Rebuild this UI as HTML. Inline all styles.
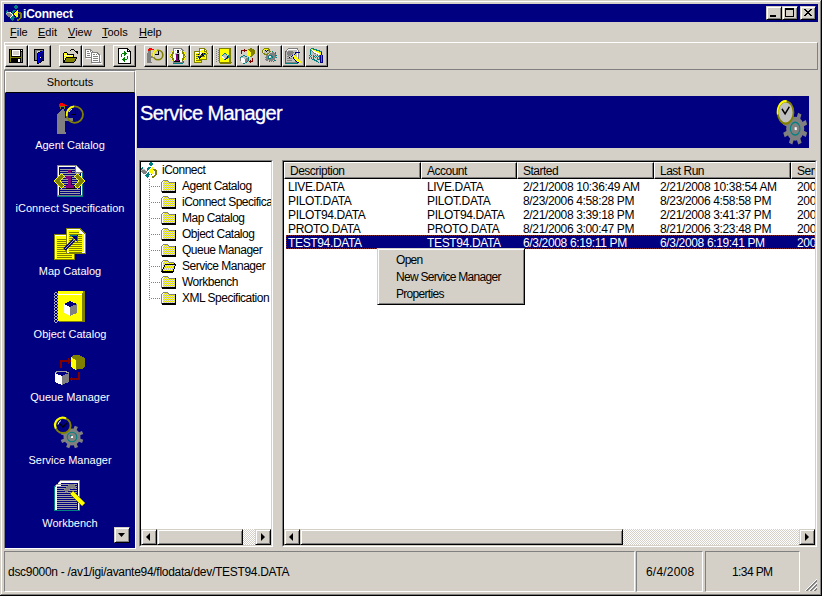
<!DOCTYPE html>
<html><head><meta charset="utf-8">
<style>
*{margin:0;padding:0;box-sizing:border-box}
html,body{width:822px;height:596px;overflow:hidden;background:#d4d0c8;font:11px "Liberation Sans",sans-serif;color:#000}
.a{position:absolute}
.t{position:absolute;white-space:pre;line-height:13px;font-size:11px}
.w{color:#fff}
.navy{background:#000080}
.track{position:absolute;background-color:#fff;background-image:linear-gradient(45deg,#d4d0c8 25%,transparent 25%,transparent 75%,#d4d0c8 75%),linear-gradient(45deg,#d4d0c8 25%,transparent 25%,transparent 75%,#d4d0c8 75%);background-size:2px 2px;background-position:0 0,1px 1px}
.u{text-decoration:underline;text-underline-offset:1px}
svg{overflow:visible}
</style></head><body>
<div class="a" style="left:1px;top:1px;width:820px;height:1px;background:#fff"></div>
<div class="a" style="left:1px;top:1px;width:1px;height:594px;background:#fff"></div>
<div class="a" style="left:820px;top:1px;width:1px;height:594px;background:#808080"></div>
<div class="a" style="left:1px;top:594px;width:820px;height:1px;background:#808080"></div>
<div class="a" style="left:821px;top:0;width:1px;height:596px;background:#000"></div>
<div class="a" style="left:0;top:595px;width:822px;height:1px;background:#000"></div>
<div class="a navy" style="left:4px;top:4px;width:814px;height:18px"></div>
<svg class="a" style="left:6px;top:5px" width="16" height="16" viewBox="0 0 16 16" shape-rendering="crispEdges"><rect x="9" y="0" width="2" height="1" fill="#008080"/><rect x="8" y="1" width="4" height="1" fill="#008080"/><rect x="8" y="2" width="4" height="1" fill="#008080"/><rect x="9" y="3" width="2" height="1" fill="#008080"/><rect x="1" y="5" width="1" height="1" fill="#008080"/><rect x="7" y="5" width="3" height="1" fill="#008080"/><rect x="11" y="5" width="1" height="1" fill="#ffff00"/><rect x="0" y="6" width="2" height="1" fill="#008080"/><rect x="6" y="6" width="3" height="1" fill="#008080"/><rect x="10" y="6" width="2" height="1" fill="#ffff00"/><rect x="0" y="7" width="1" height="1" fill="#008080"/><rect x="1" y="7" width="3" height="1" fill="#c0c0c0"/><rect x="4" y="7" width="1" height="1" fill="#ffffff"/><rect x="6" y="7" width="2" height="1" fill="#008080"/><rect x="9" y="7" width="3" height="1" fill="#ffff00"/><rect x="12" y="7" width="3" height="1" fill="#808000"/><rect x="0" y="8" width="1" height="1" fill="#c0c0c0"/><rect x="1" y="8" width="3" height="1" fill="#808080"/><rect x="4" y="8" width="1" height="1" fill="#c0c0c0"/><rect x="5" y="8" width="1" height="1" fill="#ffffff"/><rect x="6" y="8" width="1" height="1" fill="#008080"/><rect x="8" y="8" width="4" height="1" fill="#ffff00"/><rect x="13" y="8" width="3" height="1" fill="#808000"/><rect x="0" y="9" width="6" height="1" fill="#808080"/><rect x="6" y="9" width="1" height="1" fill="#ffffff"/><rect x="8" y="9" width="4" height="1" fill="#ffff00"/><rect x="14" y="9" width="2" height="1" fill="#808000"/><rect x="1" y="10" width="5" height="1" fill="#808080"/><rect x="6" y="10" width="1" height="1" fill="#ffffff"/><rect x="7" y="10" width="1" height="1" fill="#008080"/><rect x="9" y="10" width="3" height="1" fill="#ffff00"/><rect x="14" y="10" width="2" height="1" fill="#808000"/><rect x="2" y="11" width="3" height="1" fill="#808080"/><rect x="5" y="11" width="1" height="1" fill="#ffffff"/><rect x="6" y="11" width="2" height="1" fill="#008080"/><rect x="10" y="11" width="2" height="1" fill="#ffff00"/><rect x="14" y="11" width="2" height="1" fill="#808000"/><rect x="4" y="12" width="1" height="1" fill="#ffffff"/><rect x="5" y="12" width="4" height="1" fill="#008080"/><rect x="10" y="12" width="1" height="1" fill="#008080"/><rect x="14" y="12" width="2" height="1" fill="#808000"/><rect x="4" y="13" width="4" height="1" fill="#008080"/><rect x="13" y="13" width="2" height="1" fill="#808000"/><rect x="5" y="14" width="3" height="1" fill="#008080"/><rect x="11" y="14" width="3" height="1" fill="#808000"/><rect x="6" y="15" width="1" height="1" fill="#008080"/><rect x="11" y="15" width="2" height="1" fill="#808000"/></svg>
<div class="t w" style="left:23px;top:8px;font-weight:bold;font-size:12px;letter-spacing:-0.2px">iConnect</div>
<div class="a" style="left:766px;top:6px;width:16px;height:14px;background:#d4d0c8;border-top:1px solid #d4d0c8;border-left:1px solid #d4d0c8;border-right:1px solid #000;border-bottom:1px solid #000;box-shadow:inset 1px 1px 0 #fff,inset -1px -1px 0 #808080"><svg class="a" style="left:3px;top:8px" width="6" height="2"><rect width="6" height="2" fill="#000"/></svg></div>
<div class="a" style="left:782px;top:6px;width:16px;height:14px;background:#d4d0c8;border-top:1px solid #d4d0c8;border-left:1px solid #d4d0c8;border-right:1px solid #000;border-bottom:1px solid #000;box-shadow:inset 1px 1px 0 #fff,inset -1px -1px 0 #808080"><svg class="a" style="left:2px;top:1px" width="9" height="9" shape-rendering="crispEdges"><rect width="9" height="2" fill="#000"/><rect y="2" width="1" height="7" fill="#000"/><rect x="8" y="2" width="1" height="7" fill="#000"/><rect y="8" width="9" height="1" fill="#000"/></svg></div>
<div class="a" style="left:800px;top:6px;width:16px;height:14px;background:#d4d0c8;border-top:1px solid #d4d0c8;border-left:1px solid #d4d0c8;border-right:1px solid #000;border-bottom:1px solid #000;box-shadow:inset 1px 1px 0 #fff,inset -1px -1px 0 #808080"><svg class="a" style="left:3px;top:2px" width="8" height="7" shape-rendering="crispEdges"><rect x="0" y="0" width="2" height="1" fill="#000000"/><rect x="6" y="0" width="2" height="1" fill="#000000"/><rect x="1" y="1" width="2" height="1" fill="#000000"/><rect x="5" y="1" width="2" height="1" fill="#000000"/><rect x="2" y="2" width="4" height="1" fill="#000000"/><rect x="3" y="3" width="2" height="1" fill="#000000"/><rect x="2" y="4" width="4" height="1" fill="#000000"/><rect x="1" y="5" width="2" height="1" fill="#000000"/><rect x="5" y="5" width="2" height="1" fill="#000000"/><rect x="0" y="6" width="2" height="1" fill="#000000"/><rect x="6" y="6" width="2" height="1" fill="#000000"/></svg></div>
<div class="t" style="left:10px;top:26px;"><span class="u">F</span>ile</div>
<div class="t" style="left:38px;top:26px;"><span class="u">E</span>dit</div>
<div class="t" style="left:68px;top:26px;"><span class="u">V</span>iew</div>
<div class="t" style="left:102px;top:26px;"><span class="u">T</span>ools</div>
<div class="t" style="left:139px;top:26px;"><span class="u">H</span>elp</div>
<div class="a" style="left:4px;top:42px;width:814px;height:28px;border-top:1px solid #fff;border-left:1px solid #fff;border-right:1px solid #808080;border-bottom:1px solid #808080;"></div>
<div class="a" style="left:5px;top:45px;width:23px;height:22px;background:#d4d0c8;border-top:1px solid #fff;border-left:1px solid #fff;border-right:1px solid #000;border-bottom:1px solid #000;box-shadow:inset -1px -1px 0 #808080"></div>
<svg class="a" style="left:8px;top:48px" width="16" height="16" viewBox="0 0 16 16" shape-rendering="crispEdges"><rect x="1" y="1" width="14" height="1" fill="#000000"/><rect x="1" y="2" width="1" height="1" fill="#000000"/><rect x="2" y="2" width="1" height="1" fill="#808000"/><rect x="3" y="2" width="1" height="1" fill="#000000"/><rect x="4" y="2" width="8" height="1" fill="#ffffff"/><rect x="12" y="2" width="1" height="1" fill="#000000"/><rect x="13" y="2" width="1" height="1" fill="#ffffff"/><rect x="14" y="2" width="1" height="1" fill="#000000"/><rect x="1" y="3" width="1" height="1" fill="#000000"/><rect x="2" y="3" width="1" height="1" fill="#808000"/><rect x="3" y="3" width="1" height="1" fill="#000000"/><rect x="4" y="3" width="1" height="1" fill="#ffffff"/><rect x="5" y="3" width="6" height="1" fill="#d4d0c8"/><rect x="11" y="3" width="1" height="1" fill="#ffffff"/><rect x="12" y="3" width="3" height="1" fill="#000000"/><rect x="1" y="4" width="1" height="1" fill="#000000"/><rect x="2" y="4" width="1" height="1" fill="#808000"/><rect x="3" y="4" width="1" height="1" fill="#000000"/><rect x="4" y="4" width="1" height="1" fill="#ffffff"/><rect x="5" y="4" width="6" height="1" fill="#d4d0c8"/><rect x="11" y="4" width="1" height="1" fill="#ffffff"/><rect x="12" y="4" width="1" height="1" fill="#000000"/><rect x="13" y="4" width="1" height="1" fill="#808000"/><rect x="14" y="4" width="1" height="1" fill="#000000"/><rect x="1" y="5" width="1" height="1" fill="#000000"/><rect x="2" y="5" width="1" height="1" fill="#808000"/><rect x="3" y="5" width="1" height="1" fill="#000000"/><rect x="4" y="5" width="1" height="1" fill="#ffffff"/><rect x="5" y="5" width="6" height="1" fill="#d4d0c8"/><rect x="11" y="5" width="1" height="1" fill="#ffffff"/><rect x="12" y="5" width="1" height="1" fill="#000000"/><rect x="13" y="5" width="1" height="1" fill="#808000"/><rect x="14" y="5" width="1" height="1" fill="#000000"/><rect x="1" y="6" width="1" height="1" fill="#000000"/><rect x="2" y="6" width="1" height="1" fill="#808000"/><rect x="3" y="6" width="1" height="1" fill="#000000"/><rect x="4" y="6" width="1" height="1" fill="#ffffff"/><rect x="5" y="6" width="6" height="1" fill="#d4d0c8"/><rect x="11" y="6" width="1" height="1" fill="#ffffff"/><rect x="12" y="6" width="1" height="1" fill="#000000"/><rect x="13" y="6" width="1" height="1" fill="#808000"/><rect x="14" y="6" width="1" height="1" fill="#000000"/><rect x="1" y="7" width="1" height="1" fill="#000000"/><rect x="2" y="7" width="1" height="1" fill="#808000"/><rect x="3" y="7" width="1" height="1" fill="#000000"/><rect x="4" y="7" width="8" height="1" fill="#ffffff"/><rect x="12" y="7" width="1" height="1" fill="#000000"/><rect x="13" y="7" width="1" height="1" fill="#808000"/><rect x="14" y="7" width="1" height="1" fill="#000000"/><rect x="1" y="8" width="1" height="1" fill="#000000"/><rect x="2" y="8" width="1" height="1" fill="#808000"/><rect x="3" y="8" width="10" height="1" fill="#000000"/><rect x="13" y="8" width="1" height="1" fill="#808000"/><rect x="14" y="8" width="1" height="1" fill="#000000"/><rect x="1" y="9" width="1" height="1" fill="#000000"/><rect x="2" y="9" width="12" height="1" fill="#808000"/><rect x="14" y="9" width="1" height="1" fill="#000000"/><rect x="1" y="10" width="1" height="1" fill="#000000"/><rect x="2" y="10" width="1" height="1" fill="#808000"/><rect x="3" y="10" width="10" height="1" fill="#000000"/><rect x="13" y="10" width="1" height="1" fill="#808000"/><rect x="14" y="10" width="1" height="1" fill="#000000"/><rect x="1" y="11" width="1" height="1" fill="#000000"/><rect x="2" y="11" width="1" height="1" fill="#808000"/><rect x="3" y="11" width="7" height="1" fill="#000000"/><rect x="10" y="11" width="2" height="1" fill="#ffffff"/><rect x="12" y="11" width="1" height="1" fill="#000000"/><rect x="13" y="11" width="1" height="1" fill="#808000"/><rect x="14" y="11" width="1" height="1" fill="#000000"/><rect x="1" y="12" width="1" height="1" fill="#000000"/><rect x="2" y="12" width="1" height="1" fill="#808000"/><rect x="3" y="12" width="7" height="1" fill="#000000"/><rect x="10" y="12" width="2" height="1" fill="#ffffff"/><rect x="12" y="12" width="1" height="1" fill="#000000"/><rect x="13" y="12" width="1" height="1" fill="#808000"/><rect x="14" y="12" width="1" height="1" fill="#000000"/><rect x="1" y="13" width="1" height="1" fill="#000000"/><rect x="2" y="13" width="1" height="1" fill="#808000"/><rect x="3" y="13" width="7" height="1" fill="#000000"/><rect x="10" y="13" width="2" height="1" fill="#ffffff"/><rect x="12" y="13" width="1" height="1" fill="#000000"/><rect x="13" y="13" width="1" height="1" fill="#808000"/><rect x="14" y="13" width="1" height="1" fill="#000000"/><rect x="1" y="14" width="14" height="1" fill="#000000"/></svg>
<div class="a" style="left:28px;top:45px;width:23px;height:22px;background:#d4d0c8;border-top:1px solid #fff;border-left:1px solid #fff;border-right:1px solid #000;border-bottom:1px solid #000;box-shadow:inset -1px -1px 0 #808080"></div>
<svg class="a" style="left:31px;top:48px" width="16" height="16" viewBox="0 0 16 16" shape-rendering="crispEdges"><rect x="3" y="1" width="10" height="1" fill="#000000"/><rect x="3" y="2" width="1" height="1" fill="#000000"/><rect x="4" y="2" width="8" height="1" fill="#808080"/><rect x="12" y="2" width="1" height="1" fill="#000000"/><rect x="3" y="3" width="1" height="1" fill="#000000"/><rect x="4" y="3" width="2" height="1" fill="#808080"/><rect x="9" y="3" width="2" height="1" fill="#000000"/><rect x="11" y="3" width="1" height="1" fill="#0000ff"/><rect x="12" y="3" width="1" height="1" fill="#000000"/><rect x="3" y="4" width="1" height="1" fill="#000000"/><rect x="4" y="4" width="2" height="1" fill="#808080"/><rect x="7" y="4" width="2" height="1" fill="#000000"/><rect x="9" y="4" width="1" height="1" fill="#0000ff"/><rect x="10" y="4" width="2" height="1" fill="#000080"/><rect x="12" y="4" width="1" height="1" fill="#000000"/><rect x="3" y="5" width="1" height="1" fill="#000000"/><rect x="4" y="5" width="2" height="1" fill="#808080"/><rect x="6" y="5" width="1" height="1" fill="#000000"/><rect x="7" y="5" width="1" height="1" fill="#0000ff"/><rect x="8" y="5" width="4" height="1" fill="#000080"/><rect x="12" y="5" width="1" height="1" fill="#000000"/><rect x="3" y="6" width="1" height="1" fill="#000000"/><rect x="4" y="6" width="2" height="1" fill="#808080"/><rect x="6" y="6" width="1" height="1" fill="#000000"/><rect x="7" y="6" width="1" height="1" fill="#0000ff"/><rect x="8" y="6" width="4" height="1" fill="#000080"/><rect x="12" y="6" width="1" height="1" fill="#000000"/><rect x="3" y="7" width="1" height="1" fill="#000000"/><rect x="4" y="7" width="2" height="1" fill="#808080"/><rect x="6" y="7" width="1" height="1" fill="#000000"/><rect x="7" y="7" width="1" height="1" fill="#0000ff"/><rect x="8" y="7" width="4" height="1" fill="#000080"/><rect x="12" y="7" width="1" height="1" fill="#000000"/><rect x="3" y="8" width="1" height="1" fill="#000000"/><rect x="4" y="8" width="2" height="1" fill="#808080"/><rect x="6" y="8" width="1" height="1" fill="#000000"/><rect x="7" y="8" width="1" height="1" fill="#0000ff"/><rect x="8" y="8" width="4" height="1" fill="#000080"/><rect x="12" y="8" width="1" height="1" fill="#000000"/><rect x="3" y="9" width="1" height="1" fill="#000000"/><rect x="4" y="9" width="2" height="1" fill="#808080"/><rect x="6" y="9" width="1" height="1" fill="#000000"/><rect x="7" y="9" width="1" height="1" fill="#0000ff"/><rect x="8" y="9" width="1" height="1" fill="#000080"/><rect x="9" y="9" width="1" height="1" fill="#ffffc0"/><rect x="10" y="9" width="2" height="1" fill="#000080"/><rect x="12" y="9" width="1" height="1" fill="#000000"/><rect x="3" y="10" width="1" height="1" fill="#000000"/><rect x="4" y="10" width="2" height="1" fill="#808080"/><rect x="6" y="10" width="1" height="1" fill="#000000"/><rect x="7" y="10" width="1" height="1" fill="#0000ff"/><rect x="8" y="10" width="4" height="1" fill="#000080"/><rect x="12" y="10" width="1" height="1" fill="#000000"/><rect x="3" y="11" width="1" height="1" fill="#000000"/><rect x="4" y="11" width="2" height="1" fill="#808080"/><rect x="6" y="11" width="1" height="1" fill="#000000"/><rect x="7" y="11" width="1" height="1" fill="#0000ff"/><rect x="8" y="11" width="4" height="1" fill="#000080"/><rect x="12" y="11" width="1" height="1" fill="#000000"/><rect x="3" y="12" width="4" height="1" fill="#000000"/><rect x="7" y="12" width="1" height="1" fill="#0000ff"/><rect x="8" y="12" width="3" height="1" fill="#000080"/><rect x="11" y="12" width="2" height="1" fill="#000000"/><rect x="6" y="13" width="1" height="1" fill="#000000"/><rect x="7" y="13" width="1" height="1" fill="#0000ff"/><rect x="8" y="13" width="2" height="1" fill="#000080"/><rect x="10" y="13" width="1" height="1" fill="#000000"/><rect x="6" y="14" width="1" height="1" fill="#000000"/><rect x="7" y="14" width="1" height="1" fill="#0000ff"/><rect x="8" y="14" width="2" height="1" fill="#000000"/><rect x="6" y="15" width="2" height="1" fill="#000000"/></svg>
<div class="a" style="left:59px;top:45px;width:23px;height:22px;background:#d4d0c8;border-top:1px solid #fff;border-left:1px solid #fff;border-right:1px solid #000;border-bottom:1px solid #000;box-shadow:inset -1px -1px 0 #808080"></div>
<svg class="a" style="left:62px;top:48px" width="16" height="16" viewBox="0 0 16 16" shape-rendering="crispEdges"><rect x="9" y="1" width="3" height="1" fill="#000000"/><rect x="8" y="2" width="1" height="1" fill="#000000"/><rect x="12" y="2" width="1" height="1" fill="#000000"/><rect x="13" y="3" width="3" height="1" fill="#000000"/><rect x="2" y="4" width="3" height="1" fill="#000000"/><rect x="14" y="4" width="2" height="1" fill="#000000"/><rect x="1" y="5" width="1" height="1" fill="#000000"/><rect x="2" y="5" width="1" height="1" fill="#ffff00"/><rect x="3" y="5" width="1" height="1" fill="#ffffc0"/><rect x="4" y="5" width="1" height="1" fill="#ffff00"/><rect x="5" y="5" width="1" height="1" fill="#000000"/><rect x="15" y="5" width="1" height="1" fill="#000000"/><rect x="1" y="6" width="1" height="1" fill="#000000"/><rect x="2" y="6" width="1" height="1" fill="#ffff00"/><rect x="3" y="6" width="1" height="1" fill="#ffffc0"/><rect x="4" y="6" width="1" height="1" fill="#ffff00"/><rect x="5" y="6" width="7" height="1" fill="#000000"/><rect x="1" y="7" width="1" height="1" fill="#000000"/><rect x="2" y="7" width="1" height="1" fill="#ffffc0"/><rect x="3" y="7" width="1" height="1" fill="#ffff00"/><rect x="4" y="7" width="1" height="1" fill="#ffffc0"/><rect x="5" y="7" width="1" height="1" fill="#ffff00"/><rect x="6" y="7" width="1" height="1" fill="#ffffc0"/><rect x="7" y="7" width="1" height="1" fill="#ffff00"/><rect x="8" y="7" width="1" height="1" fill="#ffffc0"/><rect x="9" y="7" width="1" height="1" fill="#ffff00"/><rect x="10" y="7" width="1" height="1" fill="#ffffc0"/><rect x="11" y="7" width="1" height="1" fill="#000000"/><rect x="1" y="8" width="1" height="1" fill="#000000"/><rect x="2" y="8" width="1" height="1" fill="#ffff00"/><rect x="3" y="8" width="1" height="1" fill="#ffffc0"/><rect x="4" y="8" width="1" height="1" fill="#ffff00"/><rect x="5" y="8" width="1" height="1" fill="#ffffc0"/><rect x="6" y="8" width="1" height="1" fill="#ffff00"/><rect x="7" y="8" width="1" height="1" fill="#ffffc0"/><rect x="8" y="8" width="1" height="1" fill="#ffff00"/><rect x="9" y="8" width="1" height="1" fill="#ffffc0"/><rect x="10" y="8" width="1" height="1" fill="#ffff00"/><rect x="11" y="8" width="1" height="1" fill="#000000"/><rect x="1" y="9" width="1" height="1" fill="#000000"/><rect x="2" y="9" width="1" height="1" fill="#ffffc0"/><rect x="3" y="9" width="1" height="1" fill="#ffff00"/><rect x="4" y="9" width="11" height="1" fill="#000000"/><rect x="1" y="10" width="1" height="1" fill="#000000"/><rect x="2" y="10" width="1" height="1" fill="#ffff00"/><rect x="3" y="10" width="1" height="1" fill="#000000"/><rect x="4" y="10" width="10" height="1" fill="#808000"/><rect x="14" y="10" width="1" height="1" fill="#000000"/><rect x="1" y="11" width="1" height="1" fill="#000000"/><rect x="2" y="11" width="1" height="1" fill="#ffffc0"/><rect x="3" y="11" width="1" height="1" fill="#000000"/><rect x="4" y="11" width="9" height="1" fill="#808000"/><rect x="13" y="11" width="1" height="1" fill="#000000"/><rect x="1" y="12" width="2" height="1" fill="#000000"/><rect x="3" y="12" width="10" height="1" fill="#808000"/><rect x="13" y="12" width="1" height="1" fill="#000000"/><rect x="1" y="13" width="2" height="1" fill="#000000"/><rect x="3" y="13" width="9" height="1" fill="#808000"/><rect x="12" y="13" width="1" height="1" fill="#000000"/><rect x="1" y="14" width="11" height="1" fill="#000000"/></svg>
<div class="a" style="left:82px;top:45px;width:23px;height:22px;background:#d4d0c8;border-top:1px solid #fff;border-left:1px solid #fff;border-right:1px solid #000;border-bottom:1px solid #000;box-shadow:inset -1px -1px 0 #808080"></div>
<svg class="a" style="left:85px;top:48px" width="16" height="16" viewBox="0 0 16 16" shape-rendering="crispEdges"><rect x="0" y="1" width="6" height="1" fill="#808080"/><rect x="0" y="2" width="1" height="1" fill="#808080"/><rect x="1" y="2" width="4" height="1" fill="#ffffff"/><rect x="5" y="2" width="2" height="1" fill="#808080"/><rect x="0" y="3" width="1" height="1" fill="#808080"/><rect x="1" y="3" width="1" height="1" fill="#ffffff"/><rect x="2" y="3" width="2" height="1" fill="#808080"/><rect x="4" y="3" width="1" height="1" fill="#ffffff"/><rect x="5" y="3" width="1" height="1" fill="#808080"/><rect x="6" y="3" width="1" height="1" fill="#ffffff"/><rect x="7" y="3" width="1" height="1" fill="#808080"/><rect x="0" y="4" width="1" height="1" fill="#808080"/><rect x="1" y="4" width="5" height="1" fill="#ffffff"/><rect x="6" y="4" width="7" height="1" fill="#808080"/><rect x="0" y="5" width="1" height="1" fill="#808080"/><rect x="1" y="5" width="1" height="1" fill="#ffffff"/><rect x="2" y="5" width="3" height="1" fill="#808080"/><rect x="5" y="5" width="1" height="1" fill="#ffffff"/><rect x="6" y="5" width="1" height="1" fill="#808080"/><rect x="7" y="5" width="5" height="1" fill="#ffffff"/><rect x="12" y="5" width="2" height="1" fill="#808080"/><rect x="0" y="6" width="1" height="1" fill="#808080"/><rect x="1" y="6" width="5" height="1" fill="#ffffff"/><rect x="6" y="6" width="1" height="1" fill="#808080"/><rect x="7" y="6" width="1" height="1" fill="#ffffff"/><rect x="8" y="6" width="2" height="1" fill="#808080"/><rect x="10" y="6" width="1" height="1" fill="#ffffff"/><rect x="11" y="6" width="1" height="1" fill="#808080"/><rect x="12" y="6" width="1" height="1" fill="#ffffff"/><rect x="13" y="6" width="2" height="1" fill="#808080"/><rect x="0" y="7" width="1" height="1" fill="#808080"/><rect x="1" y="7" width="1" height="1" fill="#ffffff"/><rect x="2" y="7" width="3" height="1" fill="#808080"/><rect x="5" y="7" width="1" height="1" fill="#ffffff"/><rect x="6" y="7" width="1" height="1" fill="#808080"/><rect x="7" y="7" width="7" height="1" fill="#ffffff"/><rect x="14" y="7" width="1" height="1" fill="#808080"/><rect x="15" y="7" width="1" height="1" fill="#ffffff"/><rect x="0" y="8" width="1" height="1" fill="#808080"/><rect x="1" y="8" width="5" height="1" fill="#ffffff"/><rect x="6" y="8" width="1" height="1" fill="#808080"/><rect x="7" y="8" width="1" height="1" fill="#ffffff"/><rect x="8" y="8" width="5" height="1" fill="#808080"/><rect x="13" y="8" width="1" height="1" fill="#ffffff"/><rect x="14" y="8" width="1" height="1" fill="#808080"/><rect x="15" y="8" width="1" height="1" fill="#ffffff"/><rect x="0" y="9" width="7" height="1" fill="#808080"/><rect x="7" y="9" width="7" height="1" fill="#ffffff"/><rect x="14" y="9" width="1" height="1" fill="#808080"/><rect x="15" y="9" width="1" height="1" fill="#ffffff"/><rect x="1" y="10" width="5" height="1" fill="#ffffff"/><rect x="6" y="10" width="1" height="1" fill="#808080"/><rect x="7" y="10" width="1" height="1" fill="#ffffff"/><rect x="8" y="10" width="5" height="1" fill="#808080"/><rect x="13" y="10" width="1" height="1" fill="#ffffff"/><rect x="14" y="10" width="1" height="1" fill="#808080"/><rect x="15" y="10" width="1" height="1" fill="#ffffff"/><rect x="6" y="11" width="1" height="1" fill="#808080"/><rect x="7" y="11" width="7" height="1" fill="#ffffff"/><rect x="14" y="11" width="1" height="1" fill="#808080"/><rect x="15" y="11" width="1" height="1" fill="#ffffff"/><rect x="6" y="12" width="1" height="1" fill="#808080"/><rect x="7" y="12" width="1" height="1" fill="#ffffff"/><rect x="8" y="12" width="5" height="1" fill="#808080"/><rect x="13" y="12" width="1" height="1" fill="#ffffff"/><rect x="14" y="12" width="1" height="1" fill="#808080"/><rect x="15" y="12" width="1" height="1" fill="#ffffff"/><rect x="6" y="13" width="1" height="1" fill="#808080"/><rect x="7" y="13" width="7" height="1" fill="#ffffff"/><rect x="14" y="13" width="1" height="1" fill="#808080"/><rect x="15" y="13" width="1" height="1" fill="#ffffff"/><rect x="6" y="14" width="10" height="1" fill="#808080"/><rect x="7" y="15" width="10" height="1" fill="#ffffff"/></svg>
<div class="a" style="left:113px;top:45px;width:23px;height:22px;background:#d4d0c8;border-top:1px solid #fff;border-left:1px solid #fff;border-right:1px solid #000;border-bottom:1px solid #000;box-shadow:inset -1px -1px 0 #808080"></div>
<svg class="a" style="left:116px;top:48px" width="16" height="16" viewBox="0 0 16 16" shape-rendering="crispEdges"><rect x="2" y="0" width="10" height="1" fill="#000000"/><rect x="2" y="1" width="1" height="1" fill="#000000"/><rect x="3" y="1" width="8" height="1" fill="#ffffff"/><rect x="11" y="1" width="2" height="1" fill="#000000"/><rect x="2" y="2" width="1" height="1" fill="#000000"/><rect x="3" y="2" width="8" height="1" fill="#ffffff"/><rect x="11" y="2" width="1" height="1" fill="#000000"/><rect x="12" y="2" width="1" height="1" fill="#ffffff"/><rect x="13" y="2" width="1" height="1" fill="#000000"/><rect x="2" y="3" width="1" height="1" fill="#000000"/><rect x="3" y="3" width="5" height="1" fill="#ffffff"/><rect x="8" y="3" width="1" height="1" fill="#008000"/><rect x="9" y="3" width="2" height="1" fill="#ffffff"/><rect x="11" y="3" width="4" height="1" fill="#000000"/><rect x="2" y="4" width="1" height="1" fill="#000000"/><rect x="3" y="4" width="5" height="1" fill="#ffffff"/><rect x="8" y="4" width="2" height="1" fill="#008000"/><rect x="10" y="4" width="4" height="1" fill="#ffffff"/><rect x="14" y="4" width="1" height="1" fill="#000000"/><rect x="2" y="5" width="1" height="1" fill="#000000"/><rect x="3" y="5" width="3" height="1" fill="#ffffff"/><rect x="6" y="5" width="5" height="1" fill="#008000"/><rect x="11" y="5" width="3" height="1" fill="#ffffff"/><rect x="14" y="5" width="1" height="1" fill="#000000"/><rect x="2" y="6" width="1" height="1" fill="#000000"/><rect x="3" y="6" width="2" height="1" fill="#ffffff"/><rect x="5" y="6" width="1" height="1" fill="#008000"/><rect x="6" y="6" width="2" height="1" fill="#ffffff"/><rect x="8" y="6" width="2" height="1" fill="#008000"/><rect x="10" y="6" width="4" height="1" fill="#ffffff"/><rect x="14" y="6" width="1" height="1" fill="#000000"/><rect x="2" y="7" width="1" height="1" fill="#000000"/><rect x="3" y="7" width="2" height="1" fill="#ffffff"/><rect x="5" y="7" width="1" height="1" fill="#008000"/><rect x="6" y="7" width="2" height="1" fill="#ffffff"/><rect x="8" y="7" width="1" height="1" fill="#008000"/><rect x="9" y="7" width="5" height="1" fill="#ffffff"/><rect x="14" y="7" width="1" height="1" fill="#000000"/><rect x="2" y="8" width="1" height="1" fill="#000000"/><rect x="3" y="8" width="2" height="1" fill="#ffffff"/><rect x="5" y="8" width="1" height="1" fill="#008000"/><rect x="6" y="8" width="5" height="1" fill="#ffffff"/><rect x="11" y="8" width="1" height="1" fill="#008000"/><rect x="12" y="8" width="2" height="1" fill="#ffffff"/><rect x="14" y="8" width="1" height="1" fill="#000000"/><rect x="2" y="9" width="1" height="1" fill="#000000"/><rect x="3" y="9" width="5" height="1" fill="#ffffff"/><rect x="8" y="9" width="1" height="1" fill="#008000"/><rect x="9" y="9" width="2" height="1" fill="#ffffff"/><rect x="11" y="9" width="1" height="1" fill="#008000"/><rect x="12" y="9" width="2" height="1" fill="#ffffff"/><rect x="14" y="9" width="1" height="1" fill="#000000"/><rect x="2" y="10" width="1" height="1" fill="#000000"/><rect x="3" y="10" width="4" height="1" fill="#ffffff"/><rect x="7" y="10" width="2" height="1" fill="#008000"/><rect x="9" y="10" width="2" height="1" fill="#ffffff"/><rect x="11" y="10" width="1" height="1" fill="#008000"/><rect x="12" y="10" width="2" height="1" fill="#ffffff"/><rect x="14" y="10" width="1" height="1" fill="#000000"/><rect x="2" y="11" width="1" height="1" fill="#000000"/><rect x="3" y="11" width="3" height="1" fill="#ffffff"/><rect x="6" y="11" width="5" height="1" fill="#008000"/><rect x="11" y="11" width="3" height="1" fill="#ffffff"/><rect x="14" y="11" width="1" height="1" fill="#000000"/><rect x="2" y="12" width="1" height="1" fill="#000000"/><rect x="3" y="12" width="4" height="1" fill="#ffffff"/><rect x="7" y="12" width="2" height="1" fill="#008000"/><rect x="9" y="12" width="5" height="1" fill="#ffffff"/><rect x="14" y="12" width="1" height="1" fill="#000000"/><rect x="2" y="13" width="1" height="1" fill="#000000"/><rect x="3" y="13" width="5" height="1" fill="#ffffff"/><rect x="8" y="13" width="1" height="1" fill="#008000"/><rect x="9" y="13" width="5" height="1" fill="#ffffff"/><rect x="14" y="13" width="1" height="1" fill="#000000"/><rect x="2" y="14" width="1" height="1" fill="#000000"/><rect x="3" y="14" width="11" height="1" fill="#ffffff"/><rect x="14" y="14" width="1" height="1" fill="#000000"/><rect x="2" y="15" width="13" height="1" fill="#000000"/></svg>
<div class="a" style="left:144px;top:45px;width:23px;height:22px;background:#d4d0c8;border-top:1px solid #fff;border-left:1px solid #fff;border-right:1px solid #000;border-bottom:1px solid #000;box-shadow:inset -1px -1px 0 #808080"></div>
<svg class="a" style="left:147px;top:48px" width="16" height="16" viewBox="0 0 16 16" shape-rendering="crispEdges"><rect x="2" y="0" width="3" height="1" fill="#ff0000"/><rect x="1" y="1" width="6" height="1" fill="#ff0000"/><rect x="1" y="2" width="2" height="1" fill="#ff0000"/><rect x="3" y="2" width="1" height="2" fill="#808000"/><rect x="1" y="3" width="3" height="2" fill="#808080"/><rect x="0" y="5" width="4" height="10" fill="#808080"/><rect x="4" y="8" width="4" height="2" fill="#808080"/><rect x="0" y="14" width="5" height="1" fill="#808080"/><circle cx="11" cy="7" r="4.8" fill="#d4d0c8" stroke="#808000" stroke-width="1.6" shape-rendering="auto"/><path d="M6.6 9 A4.8 4.8 0 0 1 10 2.3" stroke="#ffff00" stroke-width="1.6" fill="none" shape-rendering="auto"/><rect x="11" y="3" width="1" height="4" fill="#000"/><rect x="8" y="6" width="4" height="1" fill="#000"/></svg>
<div class="a" style="left:167px;top:45px;width:23px;height:22px;background:#d4d0c8;border-top:1px solid #fff;border-left:1px solid #fff;border-right:1px solid #000;border-bottom:1px solid #000;box-shadow:inset -1px -1px 0 #808080"></div>
<svg class="a" style="left:170px;top:48px" width="16" height="16" viewBox="0 0 16 16" shape-rendering="crispEdges"><rect x="3" y="0" width="9" height="1" fill="#808080"/><rect x="3" y="1" width="1" height="1" fill="#808080"/><rect x="4" y="1" width="7" height="1" fill="#ffffff"/><rect x="11" y="1" width="2" height="1" fill="#808080"/><rect x="3" y="2" width="1" height="1" fill="#808080"/><rect x="4" y="2" width="1" height="1" fill="#ffffff"/><rect x="5" y="2" width="1" height="1" fill="#c0c0c0"/><rect x="6" y="2" width="1" height="1" fill="#ffffff"/><rect x="7" y="2" width="2" height="1" fill="#000000"/><rect x="9" y="2" width="1" height="1" fill="#ffffff"/><rect x="10" y="2" width="1" height="1" fill="#c0c0c0"/><rect x="11" y="2" width="1" height="1" fill="#ffffff"/><rect x="12" y="2" width="2" height="1" fill="#808080"/><rect x="2" y="3" width="1" height="1" fill="#ffff00"/><rect x="3" y="3" width="1" height="1" fill="#808000"/><rect x="4" y="3" width="3" height="1" fill="#ffffff"/><rect x="7" y="3" width="1" height="1" fill="#800080"/><rect x="8" y="3" width="1" height="1" fill="#000000"/><rect x="9" y="3" width="3" height="1" fill="#ffffff"/><rect x="12" y="3" width="1" height="1" fill="#808000"/><rect x="13" y="3" width="1" height="1" fill="#ffff00"/><rect x="1" y="4" width="1" height="1" fill="#ffff00"/><rect x="2" y="4" width="2" height="1" fill="#808000"/><rect x="4" y="4" width="3" height="1" fill="#ffffff"/><rect x="7" y="4" width="2" height="1" fill="#000000"/><rect x="9" y="4" width="3" height="1" fill="#ffffff"/><rect x="12" y="4" width="2" height="1" fill="#808000"/><rect x="14" y="4" width="1" height="1" fill="#ffff00"/><rect x="1" y="5" width="1" height="1" fill="#ffff00"/><rect x="2" y="5" width="2" height="1" fill="#808000"/><rect x="4" y="5" width="1" height="1" fill="#ffffff"/><rect x="5" y="5" width="5" height="1" fill="#c0c0c0"/><rect x="10" y="5" width="2" height="1" fill="#ffffff"/><rect x="12" y="5" width="2" height="1" fill="#808000"/><rect x="14" y="5" width="1" height="1" fill="#ffff00"/><rect x="0" y="6" width="1" height="1" fill="#ffff00"/><rect x="1" y="6" width="2" height="1" fill="#808000"/><rect x="3" y="6" width="2" height="1" fill="#ffffff"/><rect x="5" y="6" width="1" height="1" fill="#c0c0c0"/><rect x="6" y="6" width="1" height="1" fill="#800080"/><rect x="7" y="6" width="2" height="1" fill="#000000"/><rect x="9" y="6" width="1" height="1" fill="#c0c0c0"/><rect x="10" y="6" width="3" height="1" fill="#ffffff"/><rect x="13" y="6" width="2" height="1" fill="#808000"/><rect x="15" y="6" width="1" height="1" fill="#ffff00"/><rect x="0" y="7" width="1" height="1" fill="#ffff00"/><rect x="1" y="7" width="2" height="1" fill="#808000"/><rect x="3" y="7" width="3" height="1" fill="#ffffff"/><rect x="6" y="7" width="2" height="1" fill="#800080"/><rect x="8" y="7" width="1" height="1" fill="#000000"/><rect x="9" y="7" width="1" height="1" fill="#c0c0c0"/><rect x="10" y="7" width="3" height="1" fill="#ffffff"/><rect x="13" y="7" width="2" height="1" fill="#808000"/><rect x="15" y="7" width="1" height="1" fill="#ffff00"/><rect x="0" y="8" width="1" height="1" fill="#808000"/><rect x="1" y="8" width="1" height="1" fill="#ffff00"/><rect x="2" y="8" width="1" height="1" fill="#808000"/><rect x="3" y="8" width="3" height="1" fill="#ffffff"/><rect x="6" y="8" width="2" height="1" fill="#800080"/><rect x="8" y="8" width="1" height="1" fill="#000000"/><rect x="9" y="8" width="1" height="1" fill="#c0c0c0"/><rect x="10" y="8" width="3" height="1" fill="#ffffff"/><rect x="13" y="8" width="1" height="1" fill="#808000"/><rect x="14" y="8" width="1" height="1" fill="#ffff00"/><rect x="15" y="8" width="1" height="1" fill="#808000"/><rect x="0" y="9" width="1" height="1" fill="#ffff00"/><rect x="1" y="9" width="2" height="1" fill="#808000"/><rect x="3" y="9" width="3" height="1" fill="#ffffff"/><rect x="6" y="9" width="2" height="1" fill="#800080"/><rect x="8" y="9" width="1" height="1" fill="#000000"/><rect x="9" y="9" width="1" height="1" fill="#c0c0c0"/><rect x="10" y="9" width="3" height="1" fill="#ffffff"/><rect x="13" y="9" width="2" height="1" fill="#808000"/><rect x="15" y="9" width="1" height="1" fill="#ffff00"/><rect x="1" y="10" width="1" height="1" fill="#ffff00"/><rect x="2" y="10" width="2" height="1" fill="#808000"/><rect x="4" y="10" width="2" height="1" fill="#ffffff"/><rect x="6" y="10" width="2" height="1" fill="#800080"/><rect x="8" y="10" width="1" height="1" fill="#000000"/><rect x="9" y="10" width="1" height="1" fill="#c0c0c0"/><rect x="10" y="10" width="2" height="1" fill="#ffffff"/><rect x="12" y="10" width="2" height="1" fill="#808000"/><rect x="14" y="10" width="1" height="1" fill="#ffff00"/><rect x="1" y="11" width="1" height="1" fill="#ffff00"/><rect x="2" y="11" width="2" height="1" fill="#808000"/><rect x="4" y="11" width="2" height="1" fill="#ffffff"/><rect x="6" y="11" width="2" height="1" fill="#800080"/><rect x="8" y="11" width="1" height="1" fill="#000000"/><rect x="9" y="11" width="1" height="1" fill="#c0c0c0"/><rect x="10" y="11" width="2" height="1" fill="#ffffff"/><rect x="12" y="11" width="2" height="1" fill="#808000"/><rect x="14" y="11" width="1" height="1" fill="#ffff00"/><rect x="2" y="12" width="1" height="1" fill="#ffff00"/><rect x="3" y="12" width="1" height="1" fill="#808000"/><rect x="4" y="12" width="1" height="1" fill="#ffffff"/><rect x="5" y="12" width="4" height="1" fill="#800080"/><rect x="9" y="12" width="1" height="1" fill="#000000"/><rect x="10" y="12" width="2" height="1" fill="#ffffff"/><rect x="12" y="12" width="1" height="1" fill="#808000"/><rect x="13" y="12" width="1" height="1" fill="#ffff00"/><rect x="3" y="13" width="1" height="1" fill="#808080"/><rect x="4" y="13" width="6" height="1" fill="#000000"/><rect x="10" y="13" width="2" height="1" fill="#ffffff"/><rect x="12" y="13" width="1" height="1" fill="#808080"/><rect x="13" y="13" width="1" height="1" fill="#008080"/><rect x="3" y="14" width="10" height="1" fill="#808080"/><rect x="13" y="14" width="1" height="1" fill="#008080"/><rect x="3" y="15" width="10" height="1" fill="#008080"/></svg>
<div class="a" style="left:190px;top:45px;width:23px;height:22px;background:#d4d0c8;border-top:1px solid #fff;border-left:1px solid #fff;border-right:1px solid #000;border-bottom:1px solid #000;box-shadow:inset -1px -1px 0 #808080"></div>
<svg class="a" style="left:193px;top:48px" width="16" height="16" viewBox="0 0 16 16" shape-rendering="crispEdges"><rect x="6" y="0" width="6" height="1" fill="#808000"/><rect x="6" y="1" width="1" height="1" fill="#808000"/><rect x="7" y="1" width="4" height="1" fill="#ffffff"/><rect x="11" y="1" width="2" height="1" fill="#808000"/><rect x="6" y="2" width="1" height="1" fill="#808000"/><rect x="7" y="2" width="1" height="1" fill="#ffffff"/><rect x="8" y="2" width="3" height="1" fill="#ffff00"/><rect x="11" y="2" width="1" height="1" fill="#808000"/><rect x="12" y="2" width="1" height="1" fill="#ffffff"/><rect x="13" y="2" width="1" height="1" fill="#808000"/><rect x="1" y="3" width="6" height="1" fill="#808000"/><rect x="7" y="3" width="4" height="1" fill="#ffff00"/><rect x="11" y="3" width="3" height="1" fill="#808000"/><rect x="1" y="4" width="1" height="1" fill="#808000"/><rect x="2" y="4" width="4" height="1" fill="#ffffff"/><rect x="6" y="4" width="1" height="1" fill="#808000"/><rect x="7" y="4" width="1" height="1" fill="#ffffff"/><rect x="8" y="4" width="5" height="1" fill="#ffff00"/><rect x="13" y="4" width="1" height="1" fill="#808000"/><rect x="1" y="5" width="1" height="1" fill="#808000"/><rect x="2" y="5" width="1" height="1" fill="#ffffff"/><rect x="3" y="5" width="3" height="1" fill="#ffff00"/><rect x="6" y="5" width="1" height="1" fill="#808000"/><rect x="7" y="5" width="1" height="1" fill="#ffffff"/><rect x="8" y="5" width="1" height="1" fill="#ffff00"/><rect x="9" y="5" width="1" height="1" fill="#000000"/><rect x="10" y="5" width="1" height="1" fill="#008080"/><rect x="11" y="5" width="1" height="1" fill="#000000"/><rect x="12" y="5" width="1" height="1" fill="#008080"/><rect x="13" y="5" width="1" height="1" fill="#ffff00"/><rect x="14" y="5" width="1" height="1" fill="#808000"/><rect x="1" y="6" width="1" height="1" fill="#808000"/><rect x="2" y="6" width="1" height="1" fill="#ffffff"/><rect x="3" y="6" width="2" height="1" fill="#808000"/><rect x="5" y="6" width="1" height="1" fill="#000000"/><rect x="6" y="6" width="1" height="1" fill="#808000"/><rect x="7" y="6" width="1" height="1" fill="#ffffff"/><rect x="8" y="6" width="1" height="1" fill="#000080"/><rect x="9" y="6" width="1" height="1" fill="#000000"/><rect x="10" y="6" width="2" height="1" fill="#008080"/><rect x="12" y="6" width="2" height="1" fill="#808000"/><rect x="1" y="7" width="1" height="1" fill="#808000"/><rect x="2" y="7" width="1" height="1" fill="#ffffff"/><rect x="3" y="7" width="4" height="1" fill="#ffff00"/><rect x="7" y="7" width="1" height="1" fill="#808000"/><rect x="8" y="7" width="1" height="1" fill="#008080"/><rect x="9" y="7" width="1" height="1" fill="#000080"/><rect x="10" y="7" width="1" height="1" fill="#000000"/><rect x="11" y="7" width="2" height="1" fill="#ffff00"/><rect x="13" y="7" width="1" height="1" fill="#808000"/><rect x="1" y="8" width="1" height="1" fill="#808000"/><rect x="2" y="8" width="1" height="1" fill="#ffffff"/><rect x="3" y="8" width="2" height="1" fill="#808000"/><rect x="5" y="8" width="1" height="1" fill="#000080"/><rect x="6" y="8" width="1" height="1" fill="#008080"/><rect x="7" y="8" width="1" height="1" fill="#000000"/><rect x="8" y="8" width="1" height="1" fill="#000080"/><rect x="9" y="8" width="3" height="1" fill="#808000"/><rect x="12" y="8" width="1" height="1" fill="#ffff00"/><rect x="13" y="8" width="1" height="1" fill="#808000"/><rect x="1" y="9" width="1" height="1" fill="#808000"/><rect x="2" y="9" width="1" height="1" fill="#ffffff"/><rect x="3" y="9" width="2" height="1" fill="#ffff00"/><rect x="5" y="9" width="1" height="1" fill="#008080"/><rect x="6" y="9" width="1" height="1" fill="#000080"/><rect x="7" y="9" width="1" height="1" fill="#000000"/><rect x="8" y="9" width="5" height="1" fill="#ffff00"/><rect x="13" y="9" width="1" height="1" fill="#808000"/><rect x="1" y="10" width="1" height="1" fill="#808000"/><rect x="2" y="10" width="1" height="1" fill="#ffffff"/><rect x="3" y="10" width="2" height="1" fill="#808000"/><rect x="5" y="10" width="1" height="1" fill="#ffffff"/><rect x="6" y="10" width="1" height="1" fill="#000080"/><rect x="7" y="10" width="6" height="1" fill="#ffff00"/><rect x="13" y="10" width="1" height="1" fill="#808000"/><rect x="1" y="11" width="1" height="1" fill="#808000"/><rect x="2" y="11" width="1" height="1" fill="#ffffff"/><rect x="3" y="11" width="3" height="1" fill="#ffff00"/><rect x="6" y="11" width="8" height="1" fill="#808000"/><rect x="1" y="12" width="1" height="1" fill="#808000"/><rect x="2" y="12" width="1" height="1" fill="#ffffff"/><rect x="3" y="12" width="6" height="1" fill="#808000"/><rect x="1" y="13" width="1" height="1" fill="#808000"/><rect x="2" y="13" width="1" height="1" fill="#ffffff"/><rect x="3" y="13" width="5" height="1" fill="#ffff00"/><rect x="8" y="13" width="1" height="1" fill="#808000"/><rect x="1" y="14" width="8" height="1" fill="#808000"/></svg>
<div class="a" style="left:213px;top:45px;width:23px;height:22px;background:#d4d0c8;border-top:1px solid #fff;border-left:1px solid #fff;border-right:1px solid #000;border-bottom:1px solid #000;box-shadow:inset -1px -1px 0 #808080"></div>
<svg class="a" style="left:216px;top:48px" width="16" height="16" viewBox="0 0 16 16" shape-rendering="crispEdges"><rect x="3" y="0" width="12" height="1" fill="#808000"/><rect x="0" y="1" width="1" height="1" fill="#808080"/><rect x="1" y="1" width="1" height="1" fill="#d4d0c8"/><rect x="3" y="1" width="1" height="1" fill="#808000"/><rect x="4" y="1" width="9" height="1" fill="#ffff00"/><rect x="13" y="1" width="2" height="1" fill="#808000"/><rect x="2" y="2" width="1" height="1" fill="#808080"/><rect x="3" y="2" width="1" height="1" fill="#808000"/><rect x="4" y="2" width="9" height="1" fill="#ffff00"/><rect x="13" y="2" width="2" height="1" fill="#808000"/><rect x="0" y="3" width="1" height="1" fill="#808080"/><rect x="1" y="3" width="1" height="1" fill="#d4d0c8"/><rect x="3" y="3" width="1" height="1" fill="#808000"/><rect x="4" y="3" width="9" height="1" fill="#ffff00"/><rect x="13" y="3" width="2" height="1" fill="#808000"/><rect x="2" y="4" width="1" height="1" fill="#808080"/><rect x="3" y="4" width="1" height="1" fill="#808000"/><rect x="4" y="4" width="9" height="1" fill="#ffff00"/><rect x="13" y="4" width="2" height="1" fill="#808000"/><rect x="0" y="5" width="1" height="1" fill="#808080"/><rect x="1" y="5" width="1" height="1" fill="#d4d0c8"/><rect x="3" y="5" width="1" height="1" fill="#808000"/><rect x="4" y="5" width="4" height="1" fill="#ffff00"/><rect x="8" y="5" width="2" height="1" fill="#008080"/><rect x="10" y="5" width="3" height="1" fill="#ffff00"/><rect x="13" y="5" width="2" height="1" fill="#808000"/><rect x="2" y="6" width="1" height="1" fill="#808080"/><rect x="3" y="6" width="1" height="1" fill="#808000"/><rect x="4" y="6" width="3" height="1" fill="#ffff00"/><rect x="7" y="6" width="1" height="1" fill="#008080"/><rect x="8" y="6" width="2" height="1" fill="#c0c0c0"/><rect x="10" y="6" width="1" height="1" fill="#008080"/><rect x="11" y="6" width="2" height="1" fill="#ffff00"/><rect x="13" y="6" width="2" height="1" fill="#808000"/><rect x="0" y="7" width="1" height="1" fill="#808080"/><rect x="1" y="7" width="1" height="1" fill="#d4d0c8"/><rect x="3" y="7" width="1" height="1" fill="#808000"/><rect x="4" y="7" width="2" height="1" fill="#ffff00"/><rect x="6" y="7" width="1" height="1" fill="#008080"/><rect x="7" y="7" width="5" height="1" fill="#c0c0c0"/><rect x="12" y="7" width="1" height="1" fill="#008080"/><rect x="13" y="7" width="2" height="1" fill="#808000"/><rect x="2" y="8" width="1" height="1" fill="#808080"/><rect x="3" y="8" width="1" height="1" fill="#808000"/><rect x="4" y="8" width="2" height="1" fill="#ffff00"/><rect x="6" y="8" width="1" height="1" fill="#ffffff"/><rect x="7" y="8" width="4" height="1" fill="#c0c0c0"/><rect x="11" y="8" width="1" height="1" fill="#000080"/><rect x="12" y="8" width="1" height="1" fill="#008080"/><rect x="13" y="8" width="2" height="1" fill="#808000"/><rect x="0" y="9" width="1" height="1" fill="#808080"/><rect x="1" y="9" width="1" height="1" fill="#d4d0c8"/><rect x="3" y="9" width="1" height="1" fill="#808000"/><rect x="4" y="9" width="2" height="1" fill="#ffff00"/><rect x="6" y="9" width="2" height="1" fill="#ffffff"/><rect x="8" y="9" width="2" height="1" fill="#c0c0c0"/><rect x="10" y="9" width="1" height="1" fill="#808080"/><rect x="11" y="9" width="1" height="1" fill="#000080"/><rect x="12" y="9" width="1" height="1" fill="#008080"/><rect x="13" y="9" width="2" height="1" fill="#808000"/><rect x="2" y="10" width="1" height="1" fill="#808080"/><rect x="3" y="10" width="1" height="1" fill="#808000"/><rect x="4" y="10" width="3" height="1" fill="#ffff00"/><rect x="7" y="10" width="2" height="1" fill="#ffffff"/><rect x="9" y="10" width="1" height="1" fill="#808080"/><rect x="10" y="10" width="1" height="1" fill="#000080"/><rect x="11" y="10" width="1" height="1" fill="#008080"/><rect x="12" y="10" width="1" height="1" fill="#ffff00"/><rect x="13" y="10" width="2" height="1" fill="#808000"/><rect x="0" y="11" width="1" height="1" fill="#808080"/><rect x="1" y="11" width="1" height="1" fill="#d4d0c8"/><rect x="3" y="11" width="1" height="1" fill="#808000"/><rect x="4" y="11" width="4" height="1" fill="#ffff00"/><rect x="8" y="11" width="1" height="1" fill="#008080"/><rect x="9" y="11" width="1" height="1" fill="#000080"/><rect x="10" y="11" width="3" height="1" fill="#ffff00"/><rect x="13" y="11" width="2" height="1" fill="#808000"/><rect x="2" y="12" width="1" height="1" fill="#808080"/><rect x="3" y="12" width="1" height="1" fill="#808000"/><rect x="4" y="12" width="9" height="1" fill="#ffff00"/><rect x="13" y="12" width="2" height="1" fill="#808000"/><rect x="0" y="13" width="1" height="1" fill="#808080"/><rect x="1" y="13" width="1" height="1" fill="#d4d0c8"/><rect x="3" y="13" width="1" height="1" fill="#808000"/><rect x="4" y="13" width="9" height="1" fill="#ffff00"/><rect x="13" y="13" width="2" height="1" fill="#808000"/><rect x="3" y="14" width="13" height="1" fill="#808000"/><rect x="4" y="15" width="11" height="1" fill="#808000"/></svg>
<div class="a" style="left:236px;top:45px;width:23px;height:22px;background:#d4d0c8;border-top:1px solid #fff;border-left:1px solid #fff;border-right:1px solid #000;border-bottom:1px solid #000;box-shadow:inset -1px -1px 0 #808080"></div>
<svg class="a" style="left:239px;top:48px" width="16" height="16" viewBox="0 0 16 16" shape-rendering="crispEdges"><rect x="11" y="0" width="2" height="1" fill="#808000"/><rect x="5" y="1" width="1" height="1" fill="#800000"/><rect x="9" y="1" width="6" height="1" fill="#808000"/><rect x="2" y="2" width="6" height="1" fill="#800000"/><rect x="9" y="2" width="1" height="1" fill="#ffff00"/><rect x="10" y="2" width="6" height="1" fill="#808000"/><rect x="2" y="3" width="1" height="1" fill="#800000"/><rect x="5" y="3" width="1" height="1" fill="#800000"/><rect x="8" y="3" width="3" height="1" fill="#ffff00"/><rect x="11" y="3" width="5" height="1" fill="#808000"/><rect x="2" y="4" width="1" height="1" fill="#800000"/><rect x="8" y="4" width="4" height="1" fill="#ffff00"/><rect x="12" y="4" width="4" height="1" fill="#808000"/><rect x="2" y="5" width="1" height="1" fill="#800000"/><rect x="8" y="5" width="4" height="1" fill="#ffff00"/><rect x="12" y="5" width="4" height="1" fill="#808000"/><rect x="8" y="6" width="4" height="1" fill="#ffff00"/><rect x="12" y="6" width="3" height="1" fill="#808000"/><rect x="4" y="7" width="2" height="1" fill="#008080"/><rect x="9" y="7" width="3" height="1" fill="#ffff00"/><rect x="12" y="7" width="2" height="1" fill="#808000"/><rect x="2" y="8" width="2" height="1" fill="#008080"/><rect x="4" y="8" width="2" height="1" fill="#c0c0c0"/><rect x="6" y="8" width="2" height="1" fill="#008080"/><rect x="10" y="8" width="1" height="1" fill="#ffff00"/><rect x="11" y="8" width="2" height="1" fill="#808000"/><rect x="1" y="9" width="1" height="1" fill="#008080"/><rect x="2" y="9" width="7" height="1" fill="#c0c0c0"/><rect x="9" y="9" width="1" height="1" fill="#008080"/><rect x="1" y="10" width="1" height="1" fill="#808080"/><rect x="2" y="10" width="3" height="1" fill="#ffffff"/><rect x="5" y="10" width="2" height="1" fill="#c0c0c0"/><rect x="7" y="10" width="2" height="1" fill="#808080"/><rect x="9" y="10" width="1" height="1" fill="#008080"/><rect x="13" y="10" width="1" height="1" fill="#800000"/><rect x="1" y="11" width="1" height="1" fill="#808080"/><rect x="2" y="11" width="4" height="1" fill="#ffffff"/><rect x="6" y="11" width="3" height="1" fill="#808080"/><rect x="9" y="11" width="1" height="1" fill="#008080"/><rect x="13" y="11" width="1" height="1" fill="#800000"/><rect x="1" y="12" width="1" height="1" fill="#808080"/><rect x="2" y="12" width="4" height="1" fill="#ffffff"/><rect x="6" y="12" width="3" height="1" fill="#808080"/><rect x="9" y="12" width="1" height="1" fill="#008080"/><rect x="11" y="12" width="1" height="1" fill="#800000"/><rect x="13" y="12" width="1" height="1" fill="#800000"/><rect x="2" y="13" width="4" height="1" fill="#ffffff"/><rect x="6" y="13" width="2" height="1" fill="#808080"/><rect x="8" y="13" width="1" height="1" fill="#008080"/><rect x="10" y="13" width="4" height="1" fill="#800000"/><rect x="3" y="14" width="3" height="1" fill="#ffffff"/><rect x="6" y="14" width="1" height="1" fill="#808080"/><rect x="7" y="14" width="1" height="1" fill="#008080"/><rect x="11" y="14" width="1" height="1" fill="#800000"/><rect x="4" y="15" width="2" height="1" fill="#008080"/></svg>
<div class="a" style="left:259px;top:45px;width:23px;height:22px;background:#d4d0c8;border-top:1px solid #fff;border-left:1px solid #fff;border-right:1px solid #000;border-bottom:1px solid #000;box-shadow:inset -1px -1px 0 #808080"></div>
<svg class="a" style="left:262px;top:48px" width="16" height="16" viewBox="0 0 16 16" shape-rendering="crispEdges"><rect x="2" y="0" width="5" height="1" fill="#808000"/><rect x="1" y="1" width="1" height="1" fill="#808000"/><rect x="2" y="1" width="4" height="1" fill="#ffff00"/><rect x="6" y="1" width="2" height="1" fill="#808000"/><rect x="0" y="2" width="1" height="1" fill="#808000"/><rect x="1" y="2" width="1" height="1" fill="#ffff00"/><rect x="2" y="2" width="1" height="1" fill="#c0c0c0"/><rect x="3" y="2" width="1" height="1" fill="#000000"/><rect x="4" y="2" width="1" height="1" fill="#c0c0c0"/><rect x="5" y="2" width="1" height="1" fill="#000000"/><rect x="6" y="2" width="2" height="1" fill="#808000"/><rect x="0" y="3" width="1" height="1" fill="#808000"/><rect x="1" y="3" width="1" height="1" fill="#ffff00"/><rect x="2" y="3" width="2" height="1" fill="#c0c0c0"/><rect x="4" y="3" width="1" height="1" fill="#000000"/><rect x="5" y="3" width="2" height="1" fill="#c0c0c0"/><rect x="7" y="3" width="2" height="1" fill="#808000"/><rect x="10" y="3" width="1" height="1" fill="#008080"/><rect x="0" y="4" width="1" height="1" fill="#808000"/><rect x="1" y="4" width="1" height="1" fill="#ffff00"/><rect x="2" y="4" width="5" height="1" fill="#c0c0c0"/><rect x="7" y="4" width="1" height="1" fill="#808000"/><rect x="10" y="4" width="2" height="1" fill="#808080"/><rect x="13" y="4" width="1" height="1" fill="#008080"/><rect x="1" y="5" width="2" height="1" fill="#808000"/><rect x="3" y="5" width="2" height="1" fill="#c0c0c0"/><rect x="5" y="5" width="2" height="1" fill="#808000"/><rect x="8" y="5" width="5" height="1" fill="#808080"/><rect x="13" y="5" width="1" height="1" fill="#008080"/><rect x="2" y="6" width="4" height="1" fill="#808000"/><rect x="7" y="6" width="7" height="1" fill="#808080"/><rect x="4" y="7" width="3" height="1" fill="#808080"/><rect x="7" y="7" width="3" height="1" fill="#008080"/><rect x="10" y="7" width="3" height="1" fill="#808080"/><rect x="13" y="7" width="2" height="1" fill="#008080"/><rect x="4" y="8" width="2" height="1" fill="#808080"/><rect x="6" y="8" width="1" height="1" fill="#008080"/><rect x="7" y="8" width="2" height="1" fill="#ffffff"/><rect x="9" y="8" width="2" height="1" fill="#008080"/><rect x="11" y="8" width="3" height="1" fill="#808080"/><rect x="3" y="9" width="3" height="1" fill="#808080"/><rect x="6" y="9" width="1" height="1" fill="#008080"/><rect x="7" y="9" width="1" height="1" fill="#ffffff"/><rect x="8" y="9" width="1" height="1" fill="#c0c0c0"/><rect x="9" y="9" width="1" height="1" fill="#808080"/><rect x="10" y="9" width="1" height="1" fill="#008080"/><rect x="11" y="9" width="3" height="1" fill="#808080"/><rect x="14" y="9" width="1" height="1" fill="#008080"/><rect x="4" y="10" width="2" height="1" fill="#808080"/><rect x="6" y="10" width="3" height="1" fill="#008080"/><rect x="9" y="10" width="4" height="1" fill="#808080"/><rect x="3" y="11" width="10" height="1" fill="#808080"/><rect x="4" y="12" width="2" height="1" fill="#808080"/><rect x="7" y="12" width="4" height="1" fill="#808080"/><rect x="12" y="12" width="2" height="1" fill="#008080"/><rect x="7" y="13" width="1" height="1" fill="#008080"/><rect x="9" y="13" width="1" height="1" fill="#808080"/><rect x="11" y="13" width="1" height="1" fill="#008080"/></svg>
<div class="a" style="left:282px;top:45px;width:23px;height:22px;background:#d4d0c8;border-top:1px solid #fff;border-left:1px solid #fff;border-right:1px solid #000;border-bottom:1px solid #000;box-shadow:inset -1px -1px 0 #808080"></div>
<svg class="a" style="left:285px;top:48px" width="16" height="16" viewBox="0 0 16 16" shape-rendering="crispEdges"><rect x="3" y="0" width="10" height="1" fill="#808080"/><rect x="2" y="1" width="1" height="1" fill="#808080"/><rect x="3" y="1" width="9" height="1" fill="#ffffff"/><rect x="12" y="1" width="1" height="1" fill="#808080"/><rect x="1" y="2" width="1" height="1" fill="#808080"/><rect x="2" y="2" width="1" height="1" fill="#ffffff"/><rect x="3" y="2" width="9" height="1" fill="#c0c0c0"/><rect x="12" y="2" width="1" height="1" fill="#ffffff"/><rect x="13" y="2" width="1" height="1" fill="#808080"/><rect x="0" y="3" width="1" height="1" fill="#008080"/><rect x="1" y="3" width="1" height="1" fill="#808080"/><rect x="2" y="3" width="1" height="1" fill="#c0c0c0"/><rect x="3" y="3" width="5" height="1" fill="#808080"/><rect x="8" y="3" width="4" height="1" fill="#c0c0c0"/><rect x="12" y="3" width="1" height="1" fill="#ffffff"/><rect x="13" y="3" width="1" height="1" fill="#808080"/><rect x="0" y="4" width="1" height="1" fill="#008080"/><rect x="1" y="4" width="1" height="1" fill="#c0c0c0"/><rect x="2" y="4" width="7" height="1" fill="#808080"/><rect x="9" y="4" width="1" height="1" fill="#c0c0c0"/><rect x="10" y="4" width="5" height="1" fill="#000080"/><rect x="0" y="5" width="1" height="1" fill="#008080"/><rect x="1" y="5" width="1" height="1" fill="#c0c0c0"/><rect x="2" y="5" width="6" height="1" fill="#808080"/><rect x="8" y="5" width="2" height="1" fill="#c0c0c0"/><rect x="10" y="5" width="1" height="1" fill="#000080"/><rect x="11" y="5" width="1" height="1" fill="#c0c0c0"/><rect x="12" y="5" width="1" height="1" fill="#ffffff"/><rect x="13" y="5" width="1" height="1" fill="#808080"/><rect x="0" y="6" width="1" height="1" fill="#008080"/><rect x="1" y="6" width="1" height="1" fill="#c0c0c0"/><rect x="2" y="6" width="6" height="1" fill="#808080"/><rect x="8" y="6" width="1" height="1" fill="#c0c0c0"/><rect x="9" y="6" width="1" height="1" fill="#000080"/><rect x="10" y="6" width="2" height="1" fill="#c0c0c0"/><rect x="12" y="6" width="1" height="1" fill="#ffffff"/><rect x="13" y="6" width="1" height="1" fill="#808080"/><rect x="0" y="7" width="1" height="1" fill="#008080"/><rect x="1" y="7" width="2" height="1" fill="#c0c0c0"/><rect x="3" y="7" width="3" height="1" fill="#808080"/><rect x="6" y="7" width="1" height="1" fill="#c0c0c0"/><rect x="7" y="7" width="1" height="1" fill="#000080"/><rect x="8" y="7" width="2" height="1" fill="#ffff00"/><rect x="10" y="7" width="2" height="1" fill="#c0c0c0"/><rect x="12" y="7" width="1" height="1" fill="#ffffff"/><rect x="13" y="7" width="1" height="1" fill="#808080"/><rect x="0" y="8" width="1" height="1" fill="#008080"/><rect x="1" y="8" width="1" height="1" fill="#c0c0c0"/><rect x="2" y="8" width="2" height="1" fill="#808080"/><rect x="4" y="8" width="2" height="1" fill="#c0c0c0"/><rect x="6" y="8" width="1" height="1" fill="#000080"/><rect x="7" y="8" width="1" height="1" fill="#c0c0c0"/><rect x="8" y="8" width="3" height="1" fill="#ffff00"/><rect x="11" y="8" width="1" height="1" fill="#c0c0c0"/><rect x="12" y="8" width="1" height="1" fill="#ffffff"/><rect x="13" y="8" width="1" height="1" fill="#808080"/><rect x="0" y="9" width="1" height="1" fill="#008080"/><rect x="1" y="9" width="3" height="1" fill="#c0c0c0"/><rect x="4" y="9" width="1" height="1" fill="#000080"/><rect x="5" y="9" width="3" height="1" fill="#c0c0c0"/><rect x="8" y="9" width="1" height="1" fill="#000080"/><rect x="9" y="9" width="3" height="1" fill="#ffff00"/><rect x="12" y="9" width="1" height="1" fill="#ffffff"/><rect x="13" y="9" width="1" height="1" fill="#808080"/><rect x="0" y="10" width="1" height="1" fill="#008080"/><rect x="1" y="10" width="1" height="1" fill="#c0c0c0"/><rect x="2" y="10" width="5" height="1" fill="#808080"/><rect x="7" y="10" width="1" height="1" fill="#c0c0c0"/><rect x="8" y="10" width="1" height="1" fill="#000080"/><rect x="9" y="10" width="4" height="1" fill="#ffff00"/><rect x="13" y="10" width="1" height="1" fill="#808080"/><rect x="0" y="11" width="1" height="1" fill="#008080"/><rect x="1" y="11" width="8" height="1" fill="#c0c0c0"/><rect x="9" y="11" width="1" height="1" fill="#000080"/><rect x="10" y="11" width="4" height="1" fill="#ffff00"/><rect x="0" y="12" width="1" height="1" fill="#008080"/><rect x="1" y="12" width="1" height="1" fill="#c0c0c0"/><rect x="2" y="12" width="5" height="1" fill="#808080"/><rect x="7" y="12" width="3" height="1" fill="#c0c0c0"/><rect x="10" y="12" width="1" height="1" fill="#000080"/><rect x="11" y="12" width="4" height="1" fill="#ffff00"/><rect x="0" y="13" width="1" height="1" fill="#008080"/><rect x="1" y="13" width="9" height="1" fill="#c0c0c0"/><rect x="10" y="13" width="1" height="1" fill="#808080"/><rect x="11" y="13" width="1" height="1" fill="#000080"/><rect x="12" y="13" width="4" height="1" fill="#ffff00"/><rect x="0" y="14" width="1" height="1" fill="#008080"/><rect x="1" y="14" width="11" height="1" fill="#808080"/><rect x="12" y="14" width="2" height="1" fill="#000080"/><rect x="14" y="14" width="2" height="1" fill="#ffff00"/><rect x="0" y="15" width="13" height="1" fill="#008080"/></svg>
<div class="a" style="left:305px;top:45px;width:23px;height:22px;background:#d4d0c8;border-top:1px solid #fff;border-left:1px solid #fff;border-right:1px solid #000;border-bottom:1px solid #000;box-shadow:inset -1px -1px 0 #808080"></div>
<svg class="a" style="left:308px;top:48px" width="16" height="16" viewBox="0 0 16 16" shape-rendering="crispEdges"><rect x="3" y="0" width="3" height="1" fill="#008080"/><rect x="2" y="1" width="1" height="1" fill="#008080"/><rect x="3" y="1" width="2" height="1" fill="#ffff00"/><rect x="5" y="1" width="4" height="1" fill="#008080"/><rect x="2" y="2" width="1" height="1" fill="#008080"/><rect x="3" y="2" width="1" height="1" fill="#808080"/><rect x="4" y="2" width="1" height="1" fill="#ffffff"/><rect x="5" y="2" width="3" height="1" fill="#ffff00"/><rect x="8" y="2" width="4" height="1" fill="#008080"/><rect x="2" y="3" width="1" height="1" fill="#008080"/><rect x="3" y="3" width="1" height="1" fill="#c0c0c0"/><rect x="4" y="3" width="1" height="1" fill="#808080"/><rect x="5" y="3" width="2" height="1" fill="#ffffff"/><rect x="7" y="3" width="4" height="1" fill="#ffff00"/><rect x="11" y="3" width="3" height="1" fill="#008080"/><rect x="2" y="4" width="1" height="1" fill="#008080"/><rect x="3" y="4" width="2" height="1" fill="#c0c0c0"/><rect x="5" y="4" width="1" height="1" fill="#808080"/><rect x="6" y="4" width="3" height="1" fill="#ffffff"/><rect x="9" y="4" width="4" height="1" fill="#ffff00"/><rect x="13" y="4" width="1" height="1" fill="#000080"/><rect x="2" y="5" width="1" height="1" fill="#008080"/><rect x="3" y="5" width="3" height="1" fill="#c0c0c0"/><rect x="6" y="5" width="2" height="1" fill="#808080"/><rect x="8" y="5" width="3" height="1" fill="#ffffff"/><rect x="11" y="5" width="2" height="1" fill="#ffff00"/><rect x="13" y="5" width="1" height="1" fill="#000080"/><rect x="2" y="6" width="1" height="1" fill="#008080"/><rect x="3" y="6" width="6" height="1" fill="#c0c0c0"/><rect x="9" y="6" width="1" height="1" fill="#808080"/><rect x="10" y="6" width="2" height="1" fill="#ffffff"/><rect x="12" y="6" width="1" height="1" fill="#ffff00"/><rect x="13" y="6" width="1" height="1" fill="#000080"/><rect x="1" y="7" width="1" height="1" fill="#008080"/><rect x="3" y="7" width="1" height="1" fill="#008080"/><rect x="5" y="7" width="1" height="1" fill="#008080"/><rect x="7" y="7" width="1" height="1" fill="#008080"/><rect x="9" y="7" width="1" height="1" fill="#008080"/><rect x="11" y="7" width="1" height="1" fill="#008080"/><rect x="12" y="7" width="1" height="1" fill="#000080"/><rect x="13" y="7" width="1" height="1" fill="#808000"/><rect x="14" y="7" width="1" height="1" fill="#000080"/><rect x="2" y="8" width="1" height="1" fill="#008080"/><rect x="5" y="8" width="2" height="1" fill="#008080"/><rect x="8" y="8" width="1" height="1" fill="#008080"/><rect x="10" y="8" width="2" height="1" fill="#008080"/><rect x="12" y="8" width="1" height="1" fill="#000080"/><rect x="13" y="8" width="1" height="1" fill="#808000"/><rect x="14" y="8" width="1" height="1" fill="#000080"/><rect x="1" y="9" width="1" height="1" fill="#008080"/><rect x="3" y="9" width="1" height="1" fill="#008080"/><rect x="5" y="9" width="1" height="1" fill="#008080"/><rect x="7" y="9" width="1" height="1" fill="#008080"/><rect x="9" y="9" width="1" height="1" fill="#008080"/><rect x="11" y="9" width="1" height="1" fill="#008080"/><rect x="12" y="9" width="1" height="1" fill="#000080"/><rect x="13" y="9" width="1" height="1" fill="#808000"/><rect x="14" y="9" width="1" height="1" fill="#000080"/><rect x="1" y="10" width="1" height="1" fill="#008080"/><rect x="3" y="10" width="1" height="1" fill="#008080"/><rect x="5" y="10" width="1" height="1" fill="#008080"/><rect x="9" y="10" width="1" height="1" fill="#008080"/><rect x="11" y="10" width="1" height="1" fill="#008080"/><rect x="12" y="10" width="1" height="1" fill="#000080"/><rect x="13" y="10" width="1" height="1" fill="#808000"/><rect x="14" y="10" width="1" height="1" fill="#000080"/><rect x="4" y="11" width="3" height="1" fill="#008080"/><rect x="9" y="11" width="3" height="1" fill="#008080"/><rect x="12" y="11" width="1" height="1" fill="#000080"/><rect x="13" y="11" width="1" height="1" fill="#808000"/><rect x="14" y="11" width="1" height="1" fill="#000080"/><rect x="6" y="12" width="3" height="1" fill="#008080"/><rect x="12" y="12" width="1" height="1" fill="#000080"/><rect x="13" y="12" width="1" height="1" fill="#808000"/><rect x="14" y="12" width="1" height="1" fill="#000080"/><rect x="8" y="13" width="2" height="1" fill="#008080"/><rect x="12" y="13" width="1" height="1" fill="#000080"/><rect x="13" y="13" width="1" height="1" fill="#808000"/><rect x="14" y="13" width="1" height="1" fill="#000080"/><rect x="10" y="14" width="1" height="1" fill="#008080"/><rect x="12" y="14" width="3" height="1" fill="#000080"/></svg>
<div class="a" style="left:4px;top:70px;width:132px;height:479px;border-top:1px solid #808080;border-left:1px solid #808080;border-right:1px solid #fff;border-bottom:1px solid #fff;"></div>
<div class="a" style="left:5px;top:71px;width:130px;height:22px;background:#d4d0c8;border-top:1px solid #fff;border-left:1px solid #fff;border-right:1px solid #808080;border-bottom:1px solid #000"></div>
<div class="t" style="left:5px;top:76px;width:130px;text-align:center">Shortcuts</div>
<div class="a navy" style="left:5px;top:93px;width:130px;height:455px"></div>
<svg class="a" style="left:53px;top:101px" width="33" height="33" viewBox="0 0 33 33" shape-rendering="crispEdges"><path d="M9 8h2v2h1v7h6v3h-6v11h1v2h-9v-19l2-3z" fill="#808080"/><rect x="7" y="5" width="5" height="3" fill="#000080"/><path d="M7 5h5v3h-1v-2h-3v2h-1z" fill="#808000"/><path d="M7 2h3v1h2v1h2v1h-7v1h-1v-2z" fill="#ff0000"/><circle cx="21.8" cy="13.6" r="8.2" fill="none" stroke="#808000" stroke-width="1.8" shape-rendering="auto"/><path d="M13.8 15 A8.2 8.2 0 0 1 21 5.4" fill="none" stroke="#ffff00" stroke-width="1.8" shape-rendering="auto"/><path d="M16 11 A6 6 0 0 1 19 8" fill="none" stroke="#fff" stroke-width="1" shape-rendering="auto"/><rect x="22" y="8" width="1" height="6" fill="#000"/><rect x="18" y="13" width="5" height="1" fill="#000"/><rect x="18" y="17" width="2" height="3" fill="#808080"/></svg>
<div class="t w" style="left:5px;top:139px;width:130px;text-align:center">Agent Catalog</div>
<svg class="a" style="left:53px;top:164px" width="33" height="33" viewBox="0 0 33 33" shape-rendering="crispEdges"><path d="M4 1h19l7 7v24h-26z" fill="#808080"/><path d="M5 2h17l7 7v22h-24z" fill="#fff"/><rect x="6" y="3" width="22" height="28" fill="#000080"/><rect x="7" y="5" width="20" height="1" fill="#a0a0a0"/><rect x="7" y="7" width="20" height="1" fill="#a0a0a0"/><rect x="7" y="9" width="20" height="1" fill="#a0a0a0"/><rect x="7" y="11" width="20" height="1" fill="#a0a0a0"/><rect x="7" y="13" width="20" height="1" fill="#a0a0a0"/><rect x="7" y="15" width="20" height="1" fill="#a0a0a0"/><rect x="7" y="17" width="20" height="1" fill="#a0a0a0"/><rect x="7" y="19" width="20" height="1" fill="#a0a0a0"/><rect x="7" y="21" width="20" height="1" fill="#a0a0a0"/><rect x="7" y="23" width="20" height="1" fill="#a0a0a0"/><rect x="7" y="25" width="20" height="1" fill="#a0a0a0"/><rect x="7" y="27" width="20" height="1" fill="#a0a0a0"/><rect x="7" y="29" width="20" height="1" fill="#a0a0a0"/><path d="M22 1h1l7 7v1h-8z" fill="#808080"/><path d="M23 2l6 6h-6z" fill="#fff"/><rect x="29" y="9" width="1" height="23" fill="#008080"/><rect x="4" y="32" width="26" height="1" fill="#008080"/><rect x="15" y="6" width="3" height="3" fill="#800080"/><rect x="18" y="7" width="1" height="2" fill="#000"/><path d="M13 12h5v9h3v3h-8v-3h2v-6h-2z" fill="#800080"/><rect x="18" y="13" width="1" height="8" fill="#000"/><rect x="21" y="22" width="1" height="3" fill="#000"/><rect x="13" y="24" width="9" height="1" fill="#000"/><path d="M8.5 9.5l3 3-4.5 4.5 4.5 4.5-3 3-7.5-7.5z" fill="#808000" stroke="#ffff00" stroke-width="1"/><path d="M24.5 9.5l-3 3 4.5 4.5-4.5 4.5 3 3 7.5-7.5z" fill="#808000" stroke="#ffff00" stroke-width="1"/></svg>
<div class="t w" style="left:5px;top:202px;width:130px;text-align:center">iConnect Specification</div>
<svg class="a" style="left:53px;top:227px" width="33" height="33" viewBox="0 0 33 33" shape-rendering="crispEdges"><rect x="1" y="7" width="21" height="26" fill="#808000"/><rect x="2" y="8" width="19" height="24" fill="#fff"/><rect x="3" y="9" width="18" height="23" fill="#ffff00"/><rect x="4" y="12" width="15" height="1" fill="#808000"/><rect x="4" y="14" width="15" height="1" fill="#808000"/><rect x="4" y="16" width="15" height="1" fill="#808000"/><rect x="4" y="18" width="15" height="1" fill="#808000"/><rect x="4" y="20" width="15" height="1" fill="#808000"/><rect x="4" y="22" width="15" height="1" fill="#808000"/><rect x="4" y="24" width="15" height="1" fill="#808000"/><rect x="4" y="26" width="15" height="1" fill="#808000"/><rect x="4" y="28" width="15" height="1" fill="#808000"/><rect x="4" y="30" width="15" height="1" fill="#808000"/><path d="M13 1h14l6 6v20h-20z" fill="#808000"/><path d="M14 2h12l6 6v18h-18z" fill="#fff"/><path d="M15 3h11l5 5v17h-16z" fill="#ffff00"/><rect x="16" y="5" width="13" height="1" fill="#808000"/><rect x="16" y="7" width="13" height="1" fill="#808000"/><rect x="16" y="9" width="13" height="1" fill="#808000"/><rect x="16" y="11" width="13" height="1" fill="#808000"/><rect x="16" y="13" width="13" height="1" fill="#808000"/><rect x="16" y="15" width="13" height="1" fill="#808000"/><rect x="16" y="17" width="13" height="1" fill="#808000"/><rect x="16" y="19" width="13" height="1" fill="#808000"/><rect x="16" y="21" width="13" height="1" fill="#808000"/><rect x="16" y="23" width="13" height="1" fill="#808000"/><rect x="16" y="25" width="13" height="1" fill="#808000"/><path d="M26 2l5 5h-5z" fill="#fff"/><path d="M11.5 22.5L21 13" stroke="#000080" stroke-width="3.2" fill="none" shape-rendering="auto"/><path d="M12 22L21 13" stroke="#a0a0a0" stroke-width="1" fill="none" shape-rendering="auto"/><path d="M17 8h8v8z" fill="#000080"/><rect x="17" y="8" width="7" height="1" fill="#008080"/><rect x="24" y="9" width="1" height="6" fill="#008080"/></svg>
<div class="t w" style="left:5px;top:265px;width:130px;text-align:center">Map Catalog</div>
<svg class="a" style="left:53px;top:290px" width="33" height="33" viewBox="0 0 33 33" shape-rendering="crispEdges"><path d="M5 1h27v31h-26z" fill="#808000"/><rect x="5" y="1" width="25" height="2" fill="#ffff00"/><rect x="5" y="3" width="24" height="28" fill="#ffff00"/><rect x="5" y="4" width="24" height="1" fill="#fff"/><ellipse cx="3" cy="4" rx="1.6" ry="1.2" fill="none" stroke="#d0d0d0" stroke-width="0.8"/><ellipse cx="3" cy="7" rx="1.6" ry="1.2" fill="none" stroke="#d0d0d0" stroke-width="0.8"/><ellipse cx="3" cy="10" rx="1.6" ry="1.2" fill="none" stroke="#d0d0d0" stroke-width="0.8"/><ellipse cx="3" cy="13" rx="1.6" ry="1.2" fill="none" stroke="#d0d0d0" stroke-width="0.8"/><ellipse cx="3" cy="16" rx="1.6" ry="1.2" fill="none" stroke="#d0d0d0" stroke-width="0.8"/><ellipse cx="3" cy="19" rx="1.6" ry="1.2" fill="none" stroke="#d0d0d0" stroke-width="0.8"/><ellipse cx="3" cy="22" rx="1.6" ry="1.2" fill="none" stroke="#d0d0d0" stroke-width="0.8"/><ellipse cx="3" cy="25" rx="1.6" ry="1.2" fill="none" stroke="#d0d0d0" stroke-width="0.8"/><ellipse cx="3" cy="28" rx="1.6" ry="1.2" fill="none" stroke="#d0d0d0" stroke-width="0.8"/><ellipse cx="3" cy="31" rx="1.6" ry="1.2" fill="none" stroke="#d0d0d0" stroke-width="0.8"/><path d="M11 14l6-3 7 3v9l-7 3-6-3z" fill="#000080"/><path d="M11 14l6 3v9l-6-3z" fill="#fff"/><path d="M17 17l7-3v9l-7 3z" fill="#808080"/></svg>
<div class="t w" style="left:5px;top:328px;width:130px;text-align:center">Object Catalog</div>
<svg class="a" style="left:53px;top:353px" width="33" height="33" viewBox="0 0 33 33" shape-rendering="crispEdges"><path d="M18 4l3-2h5l4 2 2 2v8l-3 2h-4l-2 1-4-3v-8z" fill="#808000"/><path d="M18 4l5 3v10l-5-3z" fill="#ffff00"/><path d="M3 20l3-2h6l4 2v9l-3 2-4 1-6-3z" fill="#000080"/><path d="M2 20l7 3v9l-7-3z" fill="#fff"/><path d="M9 23l7-3v9l-7 3z" fill="#808080"/><path d="M2 20l3-2h6l5 2" fill="none" stroke="#a0a0a0" stroke-width="1"/><path d="M7 7h8v-2l3 3-3 3v-2h-6v6h-2z" fill="#800000"/><path d="M25 19h2v8h-8v2l-3-3 3-3v2h6z" fill="#800000"/></svg>
<div class="t w" style="left:5px;top:391px;width:130px;text-align:center">Queue Manager</div>
<svg class="a" style="left:53px;top:416px" width="33" height="33" viewBox="0 0 33 33" shape-rendering="crispEdges"><g shape-rendering="auto"><circle cx="19" cy="21" r="8.5" fill="#808080"/><rect x="17.3" y="9.5" width="3.4" height="11.5" fill="#808080" transform="rotate(22.0 19 21)"/><rect x="17.3" y="9.5" width="3.4" height="11.5" fill="#808080" transform="rotate(67.0 19 21)"/><rect x="17.3" y="9.5" width="3.4" height="11.5" fill="#808080" transform="rotate(112.0 19 21)"/><rect x="17.3" y="9.5" width="3.4" height="11.5" fill="#808080" transform="rotate(157.0 19 21)"/><rect x="17.3" y="9.5" width="3.4" height="11.5" fill="#808080" transform="rotate(202.0 19 21)"/><rect x="17.3" y="9.5" width="3.4" height="11.5" fill="#808080" transform="rotate(247.0 19 21)"/><rect x="17.3" y="9.5" width="3.4" height="11.5" fill="#808080" transform="rotate(292.0 19 21)"/><rect x="17.3" y="9.5" width="3.4" height="11.5" fill="#808080" transform="rotate(337.0 19 21)"/><circle cx="19" cy="21" r="4.8" fill="none" stroke="#008080" stroke-width="1.1"/><rect x="18" y="20" width="2" height="2" fill="#fff"/><rect x="17" y="19" width="1.5" height="1.5" fill="#008080"/><circle cx="10" cy="9.5" r="7.6" fill="#000080" stroke="#808000" stroke-width="2"/><path d="M2.8 12.5 A7.6 7.6 0 0 1 13 2.4" fill="none" stroke="#ffff00" stroke-width="2"/><path d="M5 8.5 A5.5 5.5 0 0 1 8 4.5" fill="none" stroke="#fff" stroke-width="1"/><path d="M7 8l3 3 4-4" fill="none" stroke="#000" stroke-width="1.4"/></g></svg>
<div class="t w" style="left:5px;top:454px;width:130px;text-align:center">Service Manager</div>
<svg class="a" style="left:53px;top:479px" width="33" height="33" viewBox="0 0 33 33" shape-rendering="crispEdges"><path d="M7 1h20v31h-26v-25z" fill="#808080"/><path d="M8 2h18v29h-24v-23z" fill="#fff"/><rect x="4" y="4" width="21" height="27" fill="#000080"/><rect x="1" y="7" width="1" height="25" fill="#008080"/><rect x="1" y="31" width="26" height="1" fill="#008080"/><path d="M8 1l-6 6h6z" fill="#fff"/><rect x="4" y="5" width="20" height="1" fill="#a0a0a0"/><rect x="4" y="7" width="20" height="1" fill="#a0a0a0"/><rect x="4" y="9" width="20" height="1" fill="#a0a0a0"/><rect x="4" y="11" width="20" height="1" fill="#a0a0a0"/><rect x="4" y="13" width="20" height="1" fill="#a0a0a0"/><rect x="4" y="15" width="20" height="1" fill="#a0a0a0"/><rect x="4" y="17" width="20" height="1" fill="#a0a0a0"/><rect x="4" y="19" width="20" height="1" fill="#a0a0a0"/><rect x="4" y="21" width="20" height="1" fill="#a0a0a0"/><rect x="4" y="23" width="20" height="1" fill="#a0a0a0"/><rect x="4" y="25" width="20" height="1" fill="#a0a0a0"/><rect x="4" y="27" width="20" height="1" fill="#a0a0a0"/><rect x="4" y="29" width="20" height="1" fill="#a0a0a0"/><path d="M10 11l6-6 4 0 3 3-2 2-3-1-5 5z" fill="#808080"/><path d="M17 15l3-3 12 12-3 3z" fill="#ffff00" stroke="#808000" stroke-width="0.8"/></svg>
<div class="t w" style="left:5px;top:517px;width:130px;text-align:center">Workbench</div>
<div class="a" style="left:114px;top:527px;width:16px;height:16px;background:#d4d0c8;border-top:1px solid #d4d0c8;border-left:1px solid #d4d0c8;border-right:1px solid #000;border-bottom:1px solid #000;box-shadow:inset 1px 1px 0 #fff,inset -1px -1px 0 #808080"><svg class="a" style="left:3px;top:5px" width="7" height="4"><path d="M0 0H7L3.5 4Z" fill="#000"/></svg></div>
<div class="a navy" style="left:137px;top:96px;width:672px;height:52px"></div>
<div class="a w" style="left:140px;top:102px;font-size:20px;line-height:22px;letter-spacing:-0.6px;white-space:pre;-webkit-text-stroke:0.3px #fff">Service Manager</div>
<svg class="a" style="left:775px;top:99px" width="34" height="47" viewBox="0 0 32 33.3" preserveAspectRatio="none"><g shape-rendering="auto"><circle cx="19" cy="21" r="8.5" fill="#808080"/><rect x="17.3" y="9.5" width="3.4" height="11.5" fill="#808080" transform="rotate(22.0 19 21)"/><rect x="17.3" y="9.5" width="3.4" height="11.5" fill="#808080" transform="rotate(67.0 19 21)"/><rect x="17.3" y="9.5" width="3.4" height="11.5" fill="#808080" transform="rotate(112.0 19 21)"/><rect x="17.3" y="9.5" width="3.4" height="11.5" fill="#808080" transform="rotate(157.0 19 21)"/><rect x="17.3" y="9.5" width="3.4" height="11.5" fill="#808080" transform="rotate(202.0 19 21)"/><rect x="17.3" y="9.5" width="3.4" height="11.5" fill="#808080" transform="rotate(247.0 19 21)"/><rect x="17.3" y="9.5" width="3.4" height="11.5" fill="#808080" transform="rotate(292.0 19 21)"/><rect x="17.3" y="9.5" width="3.4" height="11.5" fill="#808080" transform="rotate(337.0 19 21)"/><circle cx="19" cy="21" r="4.5" fill="none" stroke="#008080" stroke-width="1"/><rect x="18.5" y="20" width="2" height="2" fill="#fff"/><ellipse cx="10" cy="9.5" rx="7.4" ry="7.9" fill="#c0c0c0" stroke="#808000" stroke-width="1.6"/><path d="M2.6 11 A7.4 7.9 0 0 1 11 1.6" fill="none" stroke="#ffff00" stroke-width="1.6"/><path d="M6.5 7l3 3.5 4-5" fill="none" stroke="#000" stroke-width="1.3"/></g></svg>
<div class="a" style="left:139px;top:160px;width:134px;height:387px;border-top:1px solid #808080;border-left:1px solid #808080;border-right:1px solid #fff;border-bottom:1px solid #fff;"></div>
<div class="a" style="left:140px;top:161px;width:132px;height:385px;background:#fff;border-top:1px solid #000;border-left:1px solid #000;border-right:1px solid #d4d0c8;border-bottom:1px solid #d4d0c8;"></div>
<div class="a" style="left:141px;top:162px;width:130px;height:367px;overflow:hidden;background:#fff">
<svg class="a" style="left:0px;top:0px" width="16" height="16" viewBox="0 0 16 16" shape-rendering="crispEdges"><rect x="9" y="0" width="2" height="1" fill="#008080"/><rect x="8" y="1" width="4" height="1" fill="#008080"/><rect x="8" y="2" width="4" height="1" fill="#008080"/><rect x="9" y="3" width="2" height="1" fill="#008080"/><rect x="1" y="5" width="1" height="1" fill="#008080"/><rect x="7" y="5" width="3" height="1" fill="#008080"/><rect x="11" y="5" width="1" height="1" fill="#ffff00"/><rect x="0" y="6" width="2" height="1" fill="#008080"/><rect x="6" y="6" width="3" height="1" fill="#008080"/><rect x="10" y="6" width="2" height="1" fill="#ffff00"/><rect x="0" y="7" width="1" height="1" fill="#008080"/><rect x="1" y="7" width="3" height="1" fill="#c0c0c0"/><rect x="4" y="7" width="1" height="1" fill="#ffffff"/><rect x="6" y="7" width="2" height="1" fill="#008080"/><rect x="9" y="7" width="3" height="1" fill="#ffff00"/><rect x="12" y="7" width="3" height="1" fill="#808000"/><rect x="0" y="8" width="1" height="1" fill="#c0c0c0"/><rect x="1" y="8" width="3" height="1" fill="#808080"/><rect x="4" y="8" width="1" height="1" fill="#c0c0c0"/><rect x="5" y="8" width="1" height="1" fill="#ffffff"/><rect x="6" y="8" width="1" height="1" fill="#008080"/><rect x="8" y="8" width="4" height="1" fill="#ffff00"/><rect x="13" y="8" width="3" height="1" fill="#808000"/><rect x="0" y="9" width="6" height="1" fill="#808080"/><rect x="6" y="9" width="1" height="1" fill="#ffffff"/><rect x="8" y="9" width="4" height="1" fill="#ffff00"/><rect x="14" y="9" width="2" height="1" fill="#808000"/><rect x="1" y="10" width="5" height="1" fill="#808080"/><rect x="6" y="10" width="1" height="1" fill="#ffffff"/><rect x="7" y="10" width="1" height="1" fill="#008080"/><rect x="9" y="10" width="3" height="1" fill="#ffff00"/><rect x="14" y="10" width="2" height="1" fill="#808000"/><rect x="2" y="11" width="3" height="1" fill="#808080"/><rect x="5" y="11" width="1" height="1" fill="#ffffff"/><rect x="6" y="11" width="2" height="1" fill="#008080"/><rect x="10" y="11" width="2" height="1" fill="#ffff00"/><rect x="14" y="11" width="2" height="1" fill="#808000"/><rect x="4" y="12" width="1" height="1" fill="#ffffff"/><rect x="5" y="12" width="4" height="1" fill="#008080"/><rect x="10" y="12" width="1" height="1" fill="#008080"/><rect x="14" y="12" width="2" height="1" fill="#808000"/><rect x="4" y="13" width="4" height="1" fill="#008080"/><rect x="13" y="13" width="2" height="1" fill="#808000"/><rect x="5" y="14" width="3" height="1" fill="#008080"/><rect x="11" y="14" width="3" height="1" fill="#808000"/><rect x="6" y="15" width="1" height="1" fill="#008080"/><rect x="11" y="15" width="2" height="1" fill="#808000"/></svg>
<div class="t" style="left:21px;top:2px;font-size:12px;letter-spacing:-0.5px">iConnect</div>
<div class="a" style="left:8px;top:17px;width:1px;height:121px;background-image:linear-gradient(#808080 50%,transparent 50%);background-size:1px 2px"></div>
<div class="a" style="left:10px;top:24px;width:10px;height:1px;background-image:linear-gradient(90deg,#808080 50%,transparent 50%);background-size:2px 1px"></div>
<svg class="a" style="left:20px;top:18px" width="15" height="13" viewBox="0 0 15 13" shape-rendering="crispEdges"><rect x="2" y="0" width="5" height="1" fill="#808080"/><rect x="1" y="1" width="1" height="1" fill="#808080"/><rect x="2" y="1" width="1" height="1" fill="#ffffff"/><rect x="3" y="1" width="1" height="1" fill="#ffff00"/><rect x="4" y="1" width="1" height="1" fill="#c0c0c0"/><rect x="5" y="1" width="1" height="1" fill="#ffff00"/><rect x="6" y="1" width="1" height="1" fill="#c0c0c0"/><rect x="7" y="1" width="1" height="1" fill="#808080"/><rect x="0" y="2" width="1" height="1" fill="#808080"/><rect x="1" y="2" width="1" height="1" fill="#ffffff"/><rect x="2" y="2" width="1" height="1" fill="#ffff00"/><rect x="3" y="2" width="1" height="1" fill="#c0c0c0"/><rect x="4" y="2" width="1" height="1" fill="#ffff00"/><rect x="5" y="2" width="1" height="1" fill="#c0c0c0"/><rect x="6" y="2" width="1" height="1" fill="#ffff00"/><rect x="7" y="2" width="1" height="1" fill="#c0c0c0"/><rect x="8" y="2" width="6" height="1" fill="#808080"/><rect x="14" y="2" width="1" height="1" fill="#000000"/><rect x="0" y="3" width="1" height="1" fill="#808080"/><rect x="1" y="3" width="1" height="1" fill="#ffffff"/><rect x="2" y="3" width="1" height="1" fill="#c0c0c0"/><rect x="3" y="3" width="1" height="1" fill="#ffff00"/><rect x="4" y="3" width="1" height="1" fill="#c0c0c0"/><rect x="5" y="3" width="1" height="1" fill="#ffff00"/><rect x="6" y="3" width="1" height="1" fill="#c0c0c0"/><rect x="7" y="3" width="1" height="1" fill="#ffff00"/><rect x="8" y="3" width="1" height="1" fill="#c0c0c0"/><rect x="9" y="3" width="1" height="1" fill="#ffff00"/><rect x="10" y="3" width="1" height="1" fill="#c0c0c0"/><rect x="11" y="3" width="1" height="1" fill="#ffff00"/><rect x="12" y="3" width="1" height="1" fill="#c0c0c0"/><rect x="13" y="3" width="1" height="1" fill="#ffff00"/><rect x="14" y="3" width="1" height="1" fill="#000000"/><rect x="0" y="4" width="1" height="1" fill="#808080"/><rect x="1" y="4" width="1" height="1" fill="#ffffff"/><rect x="2" y="4" width="1" height="1" fill="#ffff00"/><rect x="3" y="4" width="1" height="1" fill="#c0c0c0"/><rect x="4" y="4" width="1" height="1" fill="#ffff00"/><rect x="5" y="4" width="1" height="1" fill="#c0c0c0"/><rect x="6" y="4" width="1" height="1" fill="#ffff00"/><rect x="7" y="4" width="1" height="1" fill="#c0c0c0"/><rect x="8" y="4" width="1" height="1" fill="#ffff00"/><rect x="9" y="4" width="1" height="1" fill="#c0c0c0"/><rect x="10" y="4" width="1" height="1" fill="#ffff00"/><rect x="11" y="4" width="1" height="1" fill="#c0c0c0"/><rect x="12" y="4" width="1" height="1" fill="#ffff00"/><rect x="13" y="4" width="1" height="1" fill="#c0c0c0"/><rect x="14" y="4" width="1" height="1" fill="#000000"/><rect x="0" y="5" width="1" height="1" fill="#808080"/><rect x="1" y="5" width="1" height="1" fill="#ffffff"/><rect x="2" y="5" width="1" height="1" fill="#c0c0c0"/><rect x="3" y="5" width="1" height="1" fill="#ffff00"/><rect x="4" y="5" width="1" height="1" fill="#c0c0c0"/><rect x="5" y="5" width="1" height="1" fill="#ffff00"/><rect x="6" y="5" width="1" height="1" fill="#c0c0c0"/><rect x="7" y="5" width="1" height="1" fill="#ffff00"/><rect x="8" y="5" width="1" height="1" fill="#c0c0c0"/><rect x="9" y="5" width="1" height="1" fill="#ffff00"/><rect x="10" y="5" width="1" height="1" fill="#c0c0c0"/><rect x="11" y="5" width="1" height="1" fill="#ffff00"/><rect x="12" y="5" width="1" height="1" fill="#c0c0c0"/><rect x="13" y="5" width="1" height="1" fill="#ffff00"/><rect x="14" y="5" width="1" height="1" fill="#000000"/><rect x="0" y="6" width="1" height="1" fill="#808080"/><rect x="1" y="6" width="1" height="1" fill="#ffffff"/><rect x="2" y="6" width="1" height="1" fill="#ffff00"/><rect x="3" y="6" width="1" height="1" fill="#c0c0c0"/><rect x="4" y="6" width="1" height="1" fill="#ffff00"/><rect x="5" y="6" width="1" height="1" fill="#c0c0c0"/><rect x="6" y="6" width="1" height="1" fill="#ffff00"/><rect x="7" y="6" width="1" height="1" fill="#c0c0c0"/><rect x="8" y="6" width="1" height="1" fill="#ffff00"/><rect x="9" y="6" width="1" height="1" fill="#c0c0c0"/><rect x="10" y="6" width="1" height="1" fill="#ffff00"/><rect x="11" y="6" width="1" height="1" fill="#c0c0c0"/><rect x="12" y="6" width="1" height="1" fill="#ffff00"/><rect x="13" y="6" width="1" height="1" fill="#c0c0c0"/><rect x="14" y="6" width="1" height="1" fill="#000000"/><rect x="0" y="7" width="1" height="1" fill="#808080"/><rect x="1" y="7" width="1" height="1" fill="#ffffff"/><rect x="2" y="7" width="1" height="1" fill="#c0c0c0"/><rect x="3" y="7" width="1" height="1" fill="#ffff00"/><rect x="4" y="7" width="1" height="1" fill="#c0c0c0"/><rect x="5" y="7" width="1" height="1" fill="#ffff00"/><rect x="6" y="7" width="1" height="1" fill="#c0c0c0"/><rect x="7" y="7" width="1" height="1" fill="#ffff00"/><rect x="8" y="7" width="1" height="1" fill="#c0c0c0"/><rect x="9" y="7" width="1" height="1" fill="#ffff00"/><rect x="10" y="7" width="1" height="1" fill="#c0c0c0"/><rect x="11" y="7" width="1" height="1" fill="#ffff00"/><rect x="12" y="7" width="1" height="1" fill="#c0c0c0"/><rect x="13" y="7" width="1" height="1" fill="#ffff00"/><rect x="14" y="7" width="1" height="1" fill="#000000"/><rect x="0" y="8" width="1" height="1" fill="#808080"/><rect x="1" y="8" width="1" height="1" fill="#ffffff"/><rect x="2" y="8" width="1" height="1" fill="#ffff00"/><rect x="3" y="8" width="1" height="1" fill="#c0c0c0"/><rect x="4" y="8" width="1" height="1" fill="#ffff00"/><rect x="5" y="8" width="1" height="1" fill="#c0c0c0"/><rect x="6" y="8" width="1" height="1" fill="#ffff00"/><rect x="7" y="8" width="1" height="1" fill="#c0c0c0"/><rect x="8" y="8" width="1" height="1" fill="#ffff00"/><rect x="9" y="8" width="1" height="1" fill="#c0c0c0"/><rect x="10" y="8" width="1" height="1" fill="#ffff00"/><rect x="11" y="8" width="1" height="1" fill="#c0c0c0"/><rect x="12" y="8" width="1" height="1" fill="#ffff00"/><rect x="13" y="8" width="1" height="1" fill="#c0c0c0"/><rect x="14" y="8" width="1" height="1" fill="#000000"/><rect x="0" y="9" width="1" height="1" fill="#808080"/><rect x="1" y="9" width="1" height="1" fill="#ffffff"/><rect x="2" y="9" width="1" height="1" fill="#c0c0c0"/><rect x="3" y="9" width="1" height="1" fill="#ffff00"/><rect x="4" y="9" width="1" height="1" fill="#c0c0c0"/><rect x="5" y="9" width="1" height="1" fill="#ffff00"/><rect x="6" y="9" width="1" height="1" fill="#c0c0c0"/><rect x="7" y="9" width="1" height="1" fill="#ffff00"/><rect x="8" y="9" width="1" height="1" fill="#c0c0c0"/><rect x="9" y="9" width="1" height="1" fill="#ffff00"/><rect x="10" y="9" width="1" height="1" fill="#c0c0c0"/><rect x="11" y="9" width="1" height="1" fill="#ffff00"/><rect x="12" y="9" width="1" height="1" fill="#c0c0c0"/><rect x="13" y="9" width="1" height="1" fill="#ffff00"/><rect x="14" y="9" width="1" height="1" fill="#000000"/><rect x="0" y="10" width="1" height="1" fill="#808080"/><rect x="1" y="10" width="1" height="1" fill="#ffffff"/><rect x="2" y="10" width="1" height="1" fill="#ffff00"/><rect x="3" y="10" width="1" height="1" fill="#c0c0c0"/><rect x="4" y="10" width="1" height="1" fill="#ffff00"/><rect x="5" y="10" width="1" height="1" fill="#c0c0c0"/><rect x="6" y="10" width="1" height="1" fill="#ffff00"/><rect x="7" y="10" width="1" height="1" fill="#c0c0c0"/><rect x="8" y="10" width="1" height="1" fill="#ffff00"/><rect x="9" y="10" width="1" height="1" fill="#c0c0c0"/><rect x="10" y="10" width="1" height="1" fill="#ffff00"/><rect x="11" y="10" width="1" height="1" fill="#c0c0c0"/><rect x="12" y="10" width="1" height="1" fill="#ffff00"/><rect x="13" y="10" width="1" height="1" fill="#c0c0c0"/><rect x="14" y="10" width="1" height="1" fill="#000000"/><rect x="0" y="11" width="1" height="1" fill="#808080"/><rect x="1" y="11" width="14" height="1" fill="#000000"/><rect x="1" y="12" width="14" height="1" fill="#000000"/></svg>
<div class="t" style="left:41px;top:18px;font-size:12px;letter-spacing:-0.5px">Agent Catalog</div>
<div class="a" style="left:10px;top:40px;width:10px;height:1px;background-image:linear-gradient(90deg,#808080 50%,transparent 50%);background-size:2px 1px"></div>
<svg class="a" style="left:20px;top:34px" width="15" height="13" viewBox="0 0 15 13" shape-rendering="crispEdges"><rect x="2" y="0" width="5" height="1" fill="#808080"/><rect x="1" y="1" width="1" height="1" fill="#808080"/><rect x="2" y="1" width="1" height="1" fill="#ffffff"/><rect x="3" y="1" width="1" height="1" fill="#ffff00"/><rect x="4" y="1" width="1" height="1" fill="#c0c0c0"/><rect x="5" y="1" width="1" height="1" fill="#ffff00"/><rect x="6" y="1" width="1" height="1" fill="#c0c0c0"/><rect x="7" y="1" width="1" height="1" fill="#808080"/><rect x="0" y="2" width="1" height="1" fill="#808080"/><rect x="1" y="2" width="1" height="1" fill="#ffffff"/><rect x="2" y="2" width="1" height="1" fill="#ffff00"/><rect x="3" y="2" width="1" height="1" fill="#c0c0c0"/><rect x="4" y="2" width="1" height="1" fill="#ffff00"/><rect x="5" y="2" width="1" height="1" fill="#c0c0c0"/><rect x="6" y="2" width="1" height="1" fill="#ffff00"/><rect x="7" y="2" width="1" height="1" fill="#c0c0c0"/><rect x="8" y="2" width="6" height="1" fill="#808080"/><rect x="14" y="2" width="1" height="1" fill="#000000"/><rect x="0" y="3" width="1" height="1" fill="#808080"/><rect x="1" y="3" width="1" height="1" fill="#ffffff"/><rect x="2" y="3" width="1" height="1" fill="#c0c0c0"/><rect x="3" y="3" width="1" height="1" fill="#ffff00"/><rect x="4" y="3" width="1" height="1" fill="#c0c0c0"/><rect x="5" y="3" width="1" height="1" fill="#ffff00"/><rect x="6" y="3" width="1" height="1" fill="#c0c0c0"/><rect x="7" y="3" width="1" height="1" fill="#ffff00"/><rect x="8" y="3" width="1" height="1" fill="#c0c0c0"/><rect x="9" y="3" width="1" height="1" fill="#ffff00"/><rect x="10" y="3" width="1" height="1" fill="#c0c0c0"/><rect x="11" y="3" width="1" height="1" fill="#ffff00"/><rect x="12" y="3" width="1" height="1" fill="#c0c0c0"/><rect x="13" y="3" width="1" height="1" fill="#ffff00"/><rect x="14" y="3" width="1" height="1" fill="#000000"/><rect x="0" y="4" width="1" height="1" fill="#808080"/><rect x="1" y="4" width="1" height="1" fill="#ffffff"/><rect x="2" y="4" width="1" height="1" fill="#ffff00"/><rect x="3" y="4" width="1" height="1" fill="#c0c0c0"/><rect x="4" y="4" width="1" height="1" fill="#ffff00"/><rect x="5" y="4" width="1" height="1" fill="#c0c0c0"/><rect x="6" y="4" width="1" height="1" fill="#ffff00"/><rect x="7" y="4" width="1" height="1" fill="#c0c0c0"/><rect x="8" y="4" width="1" height="1" fill="#ffff00"/><rect x="9" y="4" width="1" height="1" fill="#c0c0c0"/><rect x="10" y="4" width="1" height="1" fill="#ffff00"/><rect x="11" y="4" width="1" height="1" fill="#c0c0c0"/><rect x="12" y="4" width="1" height="1" fill="#ffff00"/><rect x="13" y="4" width="1" height="1" fill="#c0c0c0"/><rect x="14" y="4" width="1" height="1" fill="#000000"/><rect x="0" y="5" width="1" height="1" fill="#808080"/><rect x="1" y="5" width="1" height="1" fill="#ffffff"/><rect x="2" y="5" width="1" height="1" fill="#c0c0c0"/><rect x="3" y="5" width="1" height="1" fill="#ffff00"/><rect x="4" y="5" width="1" height="1" fill="#c0c0c0"/><rect x="5" y="5" width="1" height="1" fill="#ffff00"/><rect x="6" y="5" width="1" height="1" fill="#c0c0c0"/><rect x="7" y="5" width="1" height="1" fill="#ffff00"/><rect x="8" y="5" width="1" height="1" fill="#c0c0c0"/><rect x="9" y="5" width="1" height="1" fill="#ffff00"/><rect x="10" y="5" width="1" height="1" fill="#c0c0c0"/><rect x="11" y="5" width="1" height="1" fill="#ffff00"/><rect x="12" y="5" width="1" height="1" fill="#c0c0c0"/><rect x="13" y="5" width="1" height="1" fill="#ffff00"/><rect x="14" y="5" width="1" height="1" fill="#000000"/><rect x="0" y="6" width="1" height="1" fill="#808080"/><rect x="1" y="6" width="1" height="1" fill="#ffffff"/><rect x="2" y="6" width="1" height="1" fill="#ffff00"/><rect x="3" y="6" width="1" height="1" fill="#c0c0c0"/><rect x="4" y="6" width="1" height="1" fill="#ffff00"/><rect x="5" y="6" width="1" height="1" fill="#c0c0c0"/><rect x="6" y="6" width="1" height="1" fill="#ffff00"/><rect x="7" y="6" width="1" height="1" fill="#c0c0c0"/><rect x="8" y="6" width="1" height="1" fill="#ffff00"/><rect x="9" y="6" width="1" height="1" fill="#c0c0c0"/><rect x="10" y="6" width="1" height="1" fill="#ffff00"/><rect x="11" y="6" width="1" height="1" fill="#c0c0c0"/><rect x="12" y="6" width="1" height="1" fill="#ffff00"/><rect x="13" y="6" width="1" height="1" fill="#c0c0c0"/><rect x="14" y="6" width="1" height="1" fill="#000000"/><rect x="0" y="7" width="1" height="1" fill="#808080"/><rect x="1" y="7" width="1" height="1" fill="#ffffff"/><rect x="2" y="7" width="1" height="1" fill="#c0c0c0"/><rect x="3" y="7" width="1" height="1" fill="#ffff00"/><rect x="4" y="7" width="1" height="1" fill="#c0c0c0"/><rect x="5" y="7" width="1" height="1" fill="#ffff00"/><rect x="6" y="7" width="1" height="1" fill="#c0c0c0"/><rect x="7" y="7" width="1" height="1" fill="#ffff00"/><rect x="8" y="7" width="1" height="1" fill="#c0c0c0"/><rect x="9" y="7" width="1" height="1" fill="#ffff00"/><rect x="10" y="7" width="1" height="1" fill="#c0c0c0"/><rect x="11" y="7" width="1" height="1" fill="#ffff00"/><rect x="12" y="7" width="1" height="1" fill="#c0c0c0"/><rect x="13" y="7" width="1" height="1" fill="#ffff00"/><rect x="14" y="7" width="1" height="1" fill="#000000"/><rect x="0" y="8" width="1" height="1" fill="#808080"/><rect x="1" y="8" width="1" height="1" fill="#ffffff"/><rect x="2" y="8" width="1" height="1" fill="#ffff00"/><rect x="3" y="8" width="1" height="1" fill="#c0c0c0"/><rect x="4" y="8" width="1" height="1" fill="#ffff00"/><rect x="5" y="8" width="1" height="1" fill="#c0c0c0"/><rect x="6" y="8" width="1" height="1" fill="#ffff00"/><rect x="7" y="8" width="1" height="1" fill="#c0c0c0"/><rect x="8" y="8" width="1" height="1" fill="#ffff00"/><rect x="9" y="8" width="1" height="1" fill="#c0c0c0"/><rect x="10" y="8" width="1" height="1" fill="#ffff00"/><rect x="11" y="8" width="1" height="1" fill="#c0c0c0"/><rect x="12" y="8" width="1" height="1" fill="#ffff00"/><rect x="13" y="8" width="1" height="1" fill="#c0c0c0"/><rect x="14" y="8" width="1" height="1" fill="#000000"/><rect x="0" y="9" width="1" height="1" fill="#808080"/><rect x="1" y="9" width="1" height="1" fill="#ffffff"/><rect x="2" y="9" width="1" height="1" fill="#c0c0c0"/><rect x="3" y="9" width="1" height="1" fill="#ffff00"/><rect x="4" y="9" width="1" height="1" fill="#c0c0c0"/><rect x="5" y="9" width="1" height="1" fill="#ffff00"/><rect x="6" y="9" width="1" height="1" fill="#c0c0c0"/><rect x="7" y="9" width="1" height="1" fill="#ffff00"/><rect x="8" y="9" width="1" height="1" fill="#c0c0c0"/><rect x="9" y="9" width="1" height="1" fill="#ffff00"/><rect x="10" y="9" width="1" height="1" fill="#c0c0c0"/><rect x="11" y="9" width="1" height="1" fill="#ffff00"/><rect x="12" y="9" width="1" height="1" fill="#c0c0c0"/><rect x="13" y="9" width="1" height="1" fill="#ffff00"/><rect x="14" y="9" width="1" height="1" fill="#000000"/><rect x="0" y="10" width="1" height="1" fill="#808080"/><rect x="1" y="10" width="1" height="1" fill="#ffffff"/><rect x="2" y="10" width="1" height="1" fill="#ffff00"/><rect x="3" y="10" width="1" height="1" fill="#c0c0c0"/><rect x="4" y="10" width="1" height="1" fill="#ffff00"/><rect x="5" y="10" width="1" height="1" fill="#c0c0c0"/><rect x="6" y="10" width="1" height="1" fill="#ffff00"/><rect x="7" y="10" width="1" height="1" fill="#c0c0c0"/><rect x="8" y="10" width="1" height="1" fill="#ffff00"/><rect x="9" y="10" width="1" height="1" fill="#c0c0c0"/><rect x="10" y="10" width="1" height="1" fill="#ffff00"/><rect x="11" y="10" width="1" height="1" fill="#c0c0c0"/><rect x="12" y="10" width="1" height="1" fill="#ffff00"/><rect x="13" y="10" width="1" height="1" fill="#c0c0c0"/><rect x="14" y="10" width="1" height="1" fill="#000000"/><rect x="0" y="11" width="1" height="1" fill="#808080"/><rect x="1" y="11" width="14" height="1" fill="#000000"/><rect x="1" y="12" width="14" height="1" fill="#000000"/></svg>
<div class="t" style="left:41px;top:34px;font-size:12px;letter-spacing:-0.5px">iConnect Specification</div>
<div class="a" style="left:10px;top:56px;width:10px;height:1px;background-image:linear-gradient(90deg,#808080 50%,transparent 50%);background-size:2px 1px"></div>
<svg class="a" style="left:20px;top:50px" width="15" height="13" viewBox="0 0 15 13" shape-rendering="crispEdges"><rect x="2" y="0" width="5" height="1" fill="#808080"/><rect x="1" y="1" width="1" height="1" fill="#808080"/><rect x="2" y="1" width="1" height="1" fill="#ffffff"/><rect x="3" y="1" width="1" height="1" fill="#ffff00"/><rect x="4" y="1" width="1" height="1" fill="#c0c0c0"/><rect x="5" y="1" width="1" height="1" fill="#ffff00"/><rect x="6" y="1" width="1" height="1" fill="#c0c0c0"/><rect x="7" y="1" width="1" height="1" fill="#808080"/><rect x="0" y="2" width="1" height="1" fill="#808080"/><rect x="1" y="2" width="1" height="1" fill="#ffffff"/><rect x="2" y="2" width="1" height="1" fill="#ffff00"/><rect x="3" y="2" width="1" height="1" fill="#c0c0c0"/><rect x="4" y="2" width="1" height="1" fill="#ffff00"/><rect x="5" y="2" width="1" height="1" fill="#c0c0c0"/><rect x="6" y="2" width="1" height="1" fill="#ffff00"/><rect x="7" y="2" width="1" height="1" fill="#c0c0c0"/><rect x="8" y="2" width="6" height="1" fill="#808080"/><rect x="14" y="2" width="1" height="1" fill="#000000"/><rect x="0" y="3" width="1" height="1" fill="#808080"/><rect x="1" y="3" width="1" height="1" fill="#ffffff"/><rect x="2" y="3" width="1" height="1" fill="#c0c0c0"/><rect x="3" y="3" width="1" height="1" fill="#ffff00"/><rect x="4" y="3" width="1" height="1" fill="#c0c0c0"/><rect x="5" y="3" width="1" height="1" fill="#ffff00"/><rect x="6" y="3" width="1" height="1" fill="#c0c0c0"/><rect x="7" y="3" width="1" height="1" fill="#ffff00"/><rect x="8" y="3" width="1" height="1" fill="#c0c0c0"/><rect x="9" y="3" width="1" height="1" fill="#ffff00"/><rect x="10" y="3" width="1" height="1" fill="#c0c0c0"/><rect x="11" y="3" width="1" height="1" fill="#ffff00"/><rect x="12" y="3" width="1" height="1" fill="#c0c0c0"/><rect x="13" y="3" width="1" height="1" fill="#ffff00"/><rect x="14" y="3" width="1" height="1" fill="#000000"/><rect x="0" y="4" width="1" height="1" fill="#808080"/><rect x="1" y="4" width="1" height="1" fill="#ffffff"/><rect x="2" y="4" width="1" height="1" fill="#ffff00"/><rect x="3" y="4" width="1" height="1" fill="#c0c0c0"/><rect x="4" y="4" width="1" height="1" fill="#ffff00"/><rect x="5" y="4" width="1" height="1" fill="#c0c0c0"/><rect x="6" y="4" width="1" height="1" fill="#ffff00"/><rect x="7" y="4" width="1" height="1" fill="#c0c0c0"/><rect x="8" y="4" width="1" height="1" fill="#ffff00"/><rect x="9" y="4" width="1" height="1" fill="#c0c0c0"/><rect x="10" y="4" width="1" height="1" fill="#ffff00"/><rect x="11" y="4" width="1" height="1" fill="#c0c0c0"/><rect x="12" y="4" width="1" height="1" fill="#ffff00"/><rect x="13" y="4" width="1" height="1" fill="#c0c0c0"/><rect x="14" y="4" width="1" height="1" fill="#000000"/><rect x="0" y="5" width="1" height="1" fill="#808080"/><rect x="1" y="5" width="1" height="1" fill="#ffffff"/><rect x="2" y="5" width="1" height="1" fill="#c0c0c0"/><rect x="3" y="5" width="1" height="1" fill="#ffff00"/><rect x="4" y="5" width="1" height="1" fill="#c0c0c0"/><rect x="5" y="5" width="1" height="1" fill="#ffff00"/><rect x="6" y="5" width="1" height="1" fill="#c0c0c0"/><rect x="7" y="5" width="1" height="1" fill="#ffff00"/><rect x="8" y="5" width="1" height="1" fill="#c0c0c0"/><rect x="9" y="5" width="1" height="1" fill="#ffff00"/><rect x="10" y="5" width="1" height="1" fill="#c0c0c0"/><rect x="11" y="5" width="1" height="1" fill="#ffff00"/><rect x="12" y="5" width="1" height="1" fill="#c0c0c0"/><rect x="13" y="5" width="1" height="1" fill="#ffff00"/><rect x="14" y="5" width="1" height="1" fill="#000000"/><rect x="0" y="6" width="1" height="1" fill="#808080"/><rect x="1" y="6" width="1" height="1" fill="#ffffff"/><rect x="2" y="6" width="1" height="1" fill="#ffff00"/><rect x="3" y="6" width="1" height="1" fill="#c0c0c0"/><rect x="4" y="6" width="1" height="1" fill="#ffff00"/><rect x="5" y="6" width="1" height="1" fill="#c0c0c0"/><rect x="6" y="6" width="1" height="1" fill="#ffff00"/><rect x="7" y="6" width="1" height="1" fill="#c0c0c0"/><rect x="8" y="6" width="1" height="1" fill="#ffff00"/><rect x="9" y="6" width="1" height="1" fill="#c0c0c0"/><rect x="10" y="6" width="1" height="1" fill="#ffff00"/><rect x="11" y="6" width="1" height="1" fill="#c0c0c0"/><rect x="12" y="6" width="1" height="1" fill="#ffff00"/><rect x="13" y="6" width="1" height="1" fill="#c0c0c0"/><rect x="14" y="6" width="1" height="1" fill="#000000"/><rect x="0" y="7" width="1" height="1" fill="#808080"/><rect x="1" y="7" width="1" height="1" fill="#ffffff"/><rect x="2" y="7" width="1" height="1" fill="#c0c0c0"/><rect x="3" y="7" width="1" height="1" fill="#ffff00"/><rect x="4" y="7" width="1" height="1" fill="#c0c0c0"/><rect x="5" y="7" width="1" height="1" fill="#ffff00"/><rect x="6" y="7" width="1" height="1" fill="#c0c0c0"/><rect x="7" y="7" width="1" height="1" fill="#ffff00"/><rect x="8" y="7" width="1" height="1" fill="#c0c0c0"/><rect x="9" y="7" width="1" height="1" fill="#ffff00"/><rect x="10" y="7" width="1" height="1" fill="#c0c0c0"/><rect x="11" y="7" width="1" height="1" fill="#ffff00"/><rect x="12" y="7" width="1" height="1" fill="#c0c0c0"/><rect x="13" y="7" width="1" height="1" fill="#ffff00"/><rect x="14" y="7" width="1" height="1" fill="#000000"/><rect x="0" y="8" width="1" height="1" fill="#808080"/><rect x="1" y="8" width="1" height="1" fill="#ffffff"/><rect x="2" y="8" width="1" height="1" fill="#ffff00"/><rect x="3" y="8" width="1" height="1" fill="#c0c0c0"/><rect x="4" y="8" width="1" height="1" fill="#ffff00"/><rect x="5" y="8" width="1" height="1" fill="#c0c0c0"/><rect x="6" y="8" width="1" height="1" fill="#ffff00"/><rect x="7" y="8" width="1" height="1" fill="#c0c0c0"/><rect x="8" y="8" width="1" height="1" fill="#ffff00"/><rect x="9" y="8" width="1" height="1" fill="#c0c0c0"/><rect x="10" y="8" width="1" height="1" fill="#ffff00"/><rect x="11" y="8" width="1" height="1" fill="#c0c0c0"/><rect x="12" y="8" width="1" height="1" fill="#ffff00"/><rect x="13" y="8" width="1" height="1" fill="#c0c0c0"/><rect x="14" y="8" width="1" height="1" fill="#000000"/><rect x="0" y="9" width="1" height="1" fill="#808080"/><rect x="1" y="9" width="1" height="1" fill="#ffffff"/><rect x="2" y="9" width="1" height="1" fill="#c0c0c0"/><rect x="3" y="9" width="1" height="1" fill="#ffff00"/><rect x="4" y="9" width="1" height="1" fill="#c0c0c0"/><rect x="5" y="9" width="1" height="1" fill="#ffff00"/><rect x="6" y="9" width="1" height="1" fill="#c0c0c0"/><rect x="7" y="9" width="1" height="1" fill="#ffff00"/><rect x="8" y="9" width="1" height="1" fill="#c0c0c0"/><rect x="9" y="9" width="1" height="1" fill="#ffff00"/><rect x="10" y="9" width="1" height="1" fill="#c0c0c0"/><rect x="11" y="9" width="1" height="1" fill="#ffff00"/><rect x="12" y="9" width="1" height="1" fill="#c0c0c0"/><rect x="13" y="9" width="1" height="1" fill="#ffff00"/><rect x="14" y="9" width="1" height="1" fill="#000000"/><rect x="0" y="10" width="1" height="1" fill="#808080"/><rect x="1" y="10" width="1" height="1" fill="#ffffff"/><rect x="2" y="10" width="1" height="1" fill="#ffff00"/><rect x="3" y="10" width="1" height="1" fill="#c0c0c0"/><rect x="4" y="10" width="1" height="1" fill="#ffff00"/><rect x="5" y="10" width="1" height="1" fill="#c0c0c0"/><rect x="6" y="10" width="1" height="1" fill="#ffff00"/><rect x="7" y="10" width="1" height="1" fill="#c0c0c0"/><rect x="8" y="10" width="1" height="1" fill="#ffff00"/><rect x="9" y="10" width="1" height="1" fill="#c0c0c0"/><rect x="10" y="10" width="1" height="1" fill="#ffff00"/><rect x="11" y="10" width="1" height="1" fill="#c0c0c0"/><rect x="12" y="10" width="1" height="1" fill="#ffff00"/><rect x="13" y="10" width="1" height="1" fill="#c0c0c0"/><rect x="14" y="10" width="1" height="1" fill="#000000"/><rect x="0" y="11" width="1" height="1" fill="#808080"/><rect x="1" y="11" width="14" height="1" fill="#000000"/><rect x="1" y="12" width="14" height="1" fill="#000000"/></svg>
<div class="t" style="left:41px;top:50px;font-size:12px;letter-spacing:-0.5px">Map Catalog</div>
<div class="a" style="left:10px;top:72px;width:10px;height:1px;background-image:linear-gradient(90deg,#808080 50%,transparent 50%);background-size:2px 1px"></div>
<svg class="a" style="left:20px;top:66px" width="15" height="13" viewBox="0 0 15 13" shape-rendering="crispEdges"><rect x="2" y="0" width="5" height="1" fill="#808080"/><rect x="1" y="1" width="1" height="1" fill="#808080"/><rect x="2" y="1" width="1" height="1" fill="#ffffff"/><rect x="3" y="1" width="1" height="1" fill="#ffff00"/><rect x="4" y="1" width="1" height="1" fill="#c0c0c0"/><rect x="5" y="1" width="1" height="1" fill="#ffff00"/><rect x="6" y="1" width="1" height="1" fill="#c0c0c0"/><rect x="7" y="1" width="1" height="1" fill="#808080"/><rect x="0" y="2" width="1" height="1" fill="#808080"/><rect x="1" y="2" width="1" height="1" fill="#ffffff"/><rect x="2" y="2" width="1" height="1" fill="#ffff00"/><rect x="3" y="2" width="1" height="1" fill="#c0c0c0"/><rect x="4" y="2" width="1" height="1" fill="#ffff00"/><rect x="5" y="2" width="1" height="1" fill="#c0c0c0"/><rect x="6" y="2" width="1" height="1" fill="#ffff00"/><rect x="7" y="2" width="1" height="1" fill="#c0c0c0"/><rect x="8" y="2" width="6" height="1" fill="#808080"/><rect x="14" y="2" width="1" height="1" fill="#000000"/><rect x="0" y="3" width="1" height="1" fill="#808080"/><rect x="1" y="3" width="1" height="1" fill="#ffffff"/><rect x="2" y="3" width="1" height="1" fill="#c0c0c0"/><rect x="3" y="3" width="1" height="1" fill="#ffff00"/><rect x="4" y="3" width="1" height="1" fill="#c0c0c0"/><rect x="5" y="3" width="1" height="1" fill="#ffff00"/><rect x="6" y="3" width="1" height="1" fill="#c0c0c0"/><rect x="7" y="3" width="1" height="1" fill="#ffff00"/><rect x="8" y="3" width="1" height="1" fill="#c0c0c0"/><rect x="9" y="3" width="1" height="1" fill="#ffff00"/><rect x="10" y="3" width="1" height="1" fill="#c0c0c0"/><rect x="11" y="3" width="1" height="1" fill="#ffff00"/><rect x="12" y="3" width="1" height="1" fill="#c0c0c0"/><rect x="13" y="3" width="1" height="1" fill="#ffff00"/><rect x="14" y="3" width="1" height="1" fill="#000000"/><rect x="0" y="4" width="1" height="1" fill="#808080"/><rect x="1" y="4" width="1" height="1" fill="#ffffff"/><rect x="2" y="4" width="1" height="1" fill="#ffff00"/><rect x="3" y="4" width="1" height="1" fill="#c0c0c0"/><rect x="4" y="4" width="1" height="1" fill="#ffff00"/><rect x="5" y="4" width="1" height="1" fill="#c0c0c0"/><rect x="6" y="4" width="1" height="1" fill="#ffff00"/><rect x="7" y="4" width="1" height="1" fill="#c0c0c0"/><rect x="8" y="4" width="1" height="1" fill="#ffff00"/><rect x="9" y="4" width="1" height="1" fill="#c0c0c0"/><rect x="10" y="4" width="1" height="1" fill="#ffff00"/><rect x="11" y="4" width="1" height="1" fill="#c0c0c0"/><rect x="12" y="4" width="1" height="1" fill="#ffff00"/><rect x="13" y="4" width="1" height="1" fill="#c0c0c0"/><rect x="14" y="4" width="1" height="1" fill="#000000"/><rect x="0" y="5" width="1" height="1" fill="#808080"/><rect x="1" y="5" width="1" height="1" fill="#ffffff"/><rect x="2" y="5" width="1" height="1" fill="#c0c0c0"/><rect x="3" y="5" width="1" height="1" fill="#ffff00"/><rect x="4" y="5" width="1" height="1" fill="#c0c0c0"/><rect x="5" y="5" width="1" height="1" fill="#ffff00"/><rect x="6" y="5" width="1" height="1" fill="#c0c0c0"/><rect x="7" y="5" width="1" height="1" fill="#ffff00"/><rect x="8" y="5" width="1" height="1" fill="#c0c0c0"/><rect x="9" y="5" width="1" height="1" fill="#ffff00"/><rect x="10" y="5" width="1" height="1" fill="#c0c0c0"/><rect x="11" y="5" width="1" height="1" fill="#ffff00"/><rect x="12" y="5" width="1" height="1" fill="#c0c0c0"/><rect x="13" y="5" width="1" height="1" fill="#ffff00"/><rect x="14" y="5" width="1" height="1" fill="#000000"/><rect x="0" y="6" width="1" height="1" fill="#808080"/><rect x="1" y="6" width="1" height="1" fill="#ffffff"/><rect x="2" y="6" width="1" height="1" fill="#ffff00"/><rect x="3" y="6" width="1" height="1" fill="#c0c0c0"/><rect x="4" y="6" width="1" height="1" fill="#ffff00"/><rect x="5" y="6" width="1" height="1" fill="#c0c0c0"/><rect x="6" y="6" width="1" height="1" fill="#ffff00"/><rect x="7" y="6" width="1" height="1" fill="#c0c0c0"/><rect x="8" y="6" width="1" height="1" fill="#ffff00"/><rect x="9" y="6" width="1" height="1" fill="#c0c0c0"/><rect x="10" y="6" width="1" height="1" fill="#ffff00"/><rect x="11" y="6" width="1" height="1" fill="#c0c0c0"/><rect x="12" y="6" width="1" height="1" fill="#ffff00"/><rect x="13" y="6" width="1" height="1" fill="#c0c0c0"/><rect x="14" y="6" width="1" height="1" fill="#000000"/><rect x="0" y="7" width="1" height="1" fill="#808080"/><rect x="1" y="7" width="1" height="1" fill="#ffffff"/><rect x="2" y="7" width="1" height="1" fill="#c0c0c0"/><rect x="3" y="7" width="1" height="1" fill="#ffff00"/><rect x="4" y="7" width="1" height="1" fill="#c0c0c0"/><rect x="5" y="7" width="1" height="1" fill="#ffff00"/><rect x="6" y="7" width="1" height="1" fill="#c0c0c0"/><rect x="7" y="7" width="1" height="1" fill="#ffff00"/><rect x="8" y="7" width="1" height="1" fill="#c0c0c0"/><rect x="9" y="7" width="1" height="1" fill="#ffff00"/><rect x="10" y="7" width="1" height="1" fill="#c0c0c0"/><rect x="11" y="7" width="1" height="1" fill="#ffff00"/><rect x="12" y="7" width="1" height="1" fill="#c0c0c0"/><rect x="13" y="7" width="1" height="1" fill="#ffff00"/><rect x="14" y="7" width="1" height="1" fill="#000000"/><rect x="0" y="8" width="1" height="1" fill="#808080"/><rect x="1" y="8" width="1" height="1" fill="#ffffff"/><rect x="2" y="8" width="1" height="1" fill="#ffff00"/><rect x="3" y="8" width="1" height="1" fill="#c0c0c0"/><rect x="4" y="8" width="1" height="1" fill="#ffff00"/><rect x="5" y="8" width="1" height="1" fill="#c0c0c0"/><rect x="6" y="8" width="1" height="1" fill="#ffff00"/><rect x="7" y="8" width="1" height="1" fill="#c0c0c0"/><rect x="8" y="8" width="1" height="1" fill="#ffff00"/><rect x="9" y="8" width="1" height="1" fill="#c0c0c0"/><rect x="10" y="8" width="1" height="1" fill="#ffff00"/><rect x="11" y="8" width="1" height="1" fill="#c0c0c0"/><rect x="12" y="8" width="1" height="1" fill="#ffff00"/><rect x="13" y="8" width="1" height="1" fill="#c0c0c0"/><rect x="14" y="8" width="1" height="1" fill="#000000"/><rect x="0" y="9" width="1" height="1" fill="#808080"/><rect x="1" y="9" width="1" height="1" fill="#ffffff"/><rect x="2" y="9" width="1" height="1" fill="#c0c0c0"/><rect x="3" y="9" width="1" height="1" fill="#ffff00"/><rect x="4" y="9" width="1" height="1" fill="#c0c0c0"/><rect x="5" y="9" width="1" height="1" fill="#ffff00"/><rect x="6" y="9" width="1" height="1" fill="#c0c0c0"/><rect x="7" y="9" width="1" height="1" fill="#ffff00"/><rect x="8" y="9" width="1" height="1" fill="#c0c0c0"/><rect x="9" y="9" width="1" height="1" fill="#ffff00"/><rect x="10" y="9" width="1" height="1" fill="#c0c0c0"/><rect x="11" y="9" width="1" height="1" fill="#ffff00"/><rect x="12" y="9" width="1" height="1" fill="#c0c0c0"/><rect x="13" y="9" width="1" height="1" fill="#ffff00"/><rect x="14" y="9" width="1" height="1" fill="#000000"/><rect x="0" y="10" width="1" height="1" fill="#808080"/><rect x="1" y="10" width="1" height="1" fill="#ffffff"/><rect x="2" y="10" width="1" height="1" fill="#ffff00"/><rect x="3" y="10" width="1" height="1" fill="#c0c0c0"/><rect x="4" y="10" width="1" height="1" fill="#ffff00"/><rect x="5" y="10" width="1" height="1" fill="#c0c0c0"/><rect x="6" y="10" width="1" height="1" fill="#ffff00"/><rect x="7" y="10" width="1" height="1" fill="#c0c0c0"/><rect x="8" y="10" width="1" height="1" fill="#ffff00"/><rect x="9" y="10" width="1" height="1" fill="#c0c0c0"/><rect x="10" y="10" width="1" height="1" fill="#ffff00"/><rect x="11" y="10" width="1" height="1" fill="#c0c0c0"/><rect x="12" y="10" width="1" height="1" fill="#ffff00"/><rect x="13" y="10" width="1" height="1" fill="#c0c0c0"/><rect x="14" y="10" width="1" height="1" fill="#000000"/><rect x="0" y="11" width="1" height="1" fill="#808080"/><rect x="1" y="11" width="14" height="1" fill="#000000"/><rect x="1" y="12" width="14" height="1" fill="#000000"/></svg>
<div class="t" style="left:41px;top:66px;font-size:12px;letter-spacing:-0.5px">Object Catalog</div>
<div class="a" style="left:10px;top:88px;width:10px;height:1px;background-image:linear-gradient(90deg,#808080 50%,transparent 50%);background-size:2px 1px"></div>
<svg class="a" style="left:20px;top:82px" width="15" height="13" viewBox="0 0 15 13" shape-rendering="crispEdges"><rect x="2" y="0" width="5" height="1" fill="#808080"/><rect x="1" y="1" width="1" height="1" fill="#808080"/><rect x="2" y="1" width="1" height="1" fill="#ffffff"/><rect x="3" y="1" width="1" height="1" fill="#ffff00"/><rect x="4" y="1" width="1" height="1" fill="#c0c0c0"/><rect x="5" y="1" width="1" height="1" fill="#ffff00"/><rect x="6" y="1" width="1" height="1" fill="#c0c0c0"/><rect x="7" y="1" width="1" height="1" fill="#808080"/><rect x="0" y="2" width="1" height="1" fill="#808080"/><rect x="1" y="2" width="1" height="1" fill="#ffffff"/><rect x="2" y="2" width="1" height="1" fill="#ffff00"/><rect x="3" y="2" width="1" height="1" fill="#c0c0c0"/><rect x="4" y="2" width="1" height="1" fill="#ffff00"/><rect x="5" y="2" width="1" height="1" fill="#c0c0c0"/><rect x="6" y="2" width="1" height="1" fill="#ffff00"/><rect x="7" y="2" width="1" height="1" fill="#c0c0c0"/><rect x="8" y="2" width="6" height="1" fill="#808080"/><rect x="14" y="2" width="1" height="1" fill="#000000"/><rect x="0" y="3" width="1" height="1" fill="#808080"/><rect x="1" y="3" width="1" height="1" fill="#ffffff"/><rect x="2" y="3" width="1" height="1" fill="#c0c0c0"/><rect x="3" y="3" width="1" height="1" fill="#ffff00"/><rect x="4" y="3" width="1" height="1" fill="#c0c0c0"/><rect x="5" y="3" width="1" height="1" fill="#ffff00"/><rect x="6" y="3" width="1" height="1" fill="#c0c0c0"/><rect x="7" y="3" width="1" height="1" fill="#ffff00"/><rect x="8" y="3" width="1" height="1" fill="#c0c0c0"/><rect x="9" y="3" width="1" height="1" fill="#ffff00"/><rect x="10" y="3" width="1" height="1" fill="#c0c0c0"/><rect x="11" y="3" width="1" height="1" fill="#ffff00"/><rect x="12" y="3" width="1" height="1" fill="#c0c0c0"/><rect x="13" y="3" width="1" height="1" fill="#ffff00"/><rect x="14" y="3" width="1" height="1" fill="#000000"/><rect x="0" y="4" width="1" height="1" fill="#808080"/><rect x="1" y="4" width="1" height="1" fill="#ffffff"/><rect x="2" y="4" width="1" height="1" fill="#ffff00"/><rect x="3" y="4" width="1" height="1" fill="#c0c0c0"/><rect x="4" y="4" width="1" height="1" fill="#ffff00"/><rect x="5" y="4" width="1" height="1" fill="#c0c0c0"/><rect x="6" y="4" width="1" height="1" fill="#ffff00"/><rect x="7" y="4" width="1" height="1" fill="#c0c0c0"/><rect x="8" y="4" width="1" height="1" fill="#ffff00"/><rect x="9" y="4" width="1" height="1" fill="#c0c0c0"/><rect x="10" y="4" width="1" height="1" fill="#ffff00"/><rect x="11" y="4" width="1" height="1" fill="#c0c0c0"/><rect x="12" y="4" width="1" height="1" fill="#ffff00"/><rect x="13" y="4" width="1" height="1" fill="#c0c0c0"/><rect x="14" y="4" width="1" height="1" fill="#000000"/><rect x="0" y="5" width="1" height="1" fill="#808080"/><rect x="1" y="5" width="1" height="1" fill="#ffffff"/><rect x="2" y="5" width="1" height="1" fill="#c0c0c0"/><rect x="3" y="5" width="1" height="1" fill="#ffff00"/><rect x="4" y="5" width="1" height="1" fill="#c0c0c0"/><rect x="5" y="5" width="1" height="1" fill="#ffff00"/><rect x="6" y="5" width="1" height="1" fill="#c0c0c0"/><rect x="7" y="5" width="1" height="1" fill="#ffff00"/><rect x="8" y="5" width="1" height="1" fill="#c0c0c0"/><rect x="9" y="5" width="1" height="1" fill="#ffff00"/><rect x="10" y="5" width="1" height="1" fill="#c0c0c0"/><rect x="11" y="5" width="1" height="1" fill="#ffff00"/><rect x="12" y="5" width="1" height="1" fill="#c0c0c0"/><rect x="13" y="5" width="1" height="1" fill="#ffff00"/><rect x="14" y="5" width="1" height="1" fill="#000000"/><rect x="0" y="6" width="1" height="1" fill="#808080"/><rect x="1" y="6" width="1" height="1" fill="#ffffff"/><rect x="2" y="6" width="1" height="1" fill="#ffff00"/><rect x="3" y="6" width="1" height="1" fill="#c0c0c0"/><rect x="4" y="6" width="1" height="1" fill="#ffff00"/><rect x="5" y="6" width="1" height="1" fill="#c0c0c0"/><rect x="6" y="6" width="1" height="1" fill="#ffff00"/><rect x="7" y="6" width="1" height="1" fill="#c0c0c0"/><rect x="8" y="6" width="1" height="1" fill="#ffff00"/><rect x="9" y="6" width="1" height="1" fill="#c0c0c0"/><rect x="10" y="6" width="1" height="1" fill="#ffff00"/><rect x="11" y="6" width="1" height="1" fill="#c0c0c0"/><rect x="12" y="6" width="1" height="1" fill="#ffff00"/><rect x="13" y="6" width="1" height="1" fill="#c0c0c0"/><rect x="14" y="6" width="1" height="1" fill="#000000"/><rect x="0" y="7" width="1" height="1" fill="#808080"/><rect x="1" y="7" width="1" height="1" fill="#ffffff"/><rect x="2" y="7" width="1" height="1" fill="#c0c0c0"/><rect x="3" y="7" width="1" height="1" fill="#ffff00"/><rect x="4" y="7" width="1" height="1" fill="#c0c0c0"/><rect x="5" y="7" width="1" height="1" fill="#ffff00"/><rect x="6" y="7" width="1" height="1" fill="#c0c0c0"/><rect x="7" y="7" width="1" height="1" fill="#ffff00"/><rect x="8" y="7" width="1" height="1" fill="#c0c0c0"/><rect x="9" y="7" width="1" height="1" fill="#ffff00"/><rect x="10" y="7" width="1" height="1" fill="#c0c0c0"/><rect x="11" y="7" width="1" height="1" fill="#ffff00"/><rect x="12" y="7" width="1" height="1" fill="#c0c0c0"/><rect x="13" y="7" width="1" height="1" fill="#ffff00"/><rect x="14" y="7" width="1" height="1" fill="#000000"/><rect x="0" y="8" width="1" height="1" fill="#808080"/><rect x="1" y="8" width="1" height="1" fill="#ffffff"/><rect x="2" y="8" width="1" height="1" fill="#ffff00"/><rect x="3" y="8" width="1" height="1" fill="#c0c0c0"/><rect x="4" y="8" width="1" height="1" fill="#ffff00"/><rect x="5" y="8" width="1" height="1" fill="#c0c0c0"/><rect x="6" y="8" width="1" height="1" fill="#ffff00"/><rect x="7" y="8" width="1" height="1" fill="#c0c0c0"/><rect x="8" y="8" width="1" height="1" fill="#ffff00"/><rect x="9" y="8" width="1" height="1" fill="#c0c0c0"/><rect x="10" y="8" width="1" height="1" fill="#ffff00"/><rect x="11" y="8" width="1" height="1" fill="#c0c0c0"/><rect x="12" y="8" width="1" height="1" fill="#ffff00"/><rect x="13" y="8" width="1" height="1" fill="#c0c0c0"/><rect x="14" y="8" width="1" height="1" fill="#000000"/><rect x="0" y="9" width="1" height="1" fill="#808080"/><rect x="1" y="9" width="1" height="1" fill="#ffffff"/><rect x="2" y="9" width="1" height="1" fill="#c0c0c0"/><rect x="3" y="9" width="1" height="1" fill="#ffff00"/><rect x="4" y="9" width="1" height="1" fill="#c0c0c0"/><rect x="5" y="9" width="1" height="1" fill="#ffff00"/><rect x="6" y="9" width="1" height="1" fill="#c0c0c0"/><rect x="7" y="9" width="1" height="1" fill="#ffff00"/><rect x="8" y="9" width="1" height="1" fill="#c0c0c0"/><rect x="9" y="9" width="1" height="1" fill="#ffff00"/><rect x="10" y="9" width="1" height="1" fill="#c0c0c0"/><rect x="11" y="9" width="1" height="1" fill="#ffff00"/><rect x="12" y="9" width="1" height="1" fill="#c0c0c0"/><rect x="13" y="9" width="1" height="1" fill="#ffff00"/><rect x="14" y="9" width="1" height="1" fill="#000000"/><rect x="0" y="10" width="1" height="1" fill="#808080"/><rect x="1" y="10" width="1" height="1" fill="#ffffff"/><rect x="2" y="10" width="1" height="1" fill="#ffff00"/><rect x="3" y="10" width="1" height="1" fill="#c0c0c0"/><rect x="4" y="10" width="1" height="1" fill="#ffff00"/><rect x="5" y="10" width="1" height="1" fill="#c0c0c0"/><rect x="6" y="10" width="1" height="1" fill="#ffff00"/><rect x="7" y="10" width="1" height="1" fill="#c0c0c0"/><rect x="8" y="10" width="1" height="1" fill="#ffff00"/><rect x="9" y="10" width="1" height="1" fill="#c0c0c0"/><rect x="10" y="10" width="1" height="1" fill="#ffff00"/><rect x="11" y="10" width="1" height="1" fill="#c0c0c0"/><rect x="12" y="10" width="1" height="1" fill="#ffff00"/><rect x="13" y="10" width="1" height="1" fill="#c0c0c0"/><rect x="14" y="10" width="1" height="1" fill="#000000"/><rect x="0" y="11" width="1" height="1" fill="#808080"/><rect x="1" y="11" width="14" height="1" fill="#000000"/><rect x="1" y="12" width="14" height="1" fill="#000000"/></svg>
<div class="t" style="left:41px;top:82px;font-size:12px;letter-spacing:-0.5px">Queue Manager</div>
<div class="a" style="left:10px;top:104px;width:10px;height:1px;background-image:linear-gradient(90deg,#808080 50%,transparent 50%);background-size:2px 1px"></div>
<svg class="a" style="left:20px;top:98px" width="15" height="13" viewBox="0 0 15 13" shape-rendering="crispEdges"><rect x="2" y="0" width="5" height="1" fill="#808080"/><rect x="1" y="1" width="1" height="1" fill="#808080"/><rect x="2" y="1" width="1" height="1" fill="#ffffff"/><rect x="3" y="1" width="1" height="1" fill="#ffff00"/><rect x="4" y="1" width="1" height="1" fill="#c0c0c0"/><rect x="5" y="1" width="1" height="1" fill="#ffff00"/><rect x="6" y="1" width="1" height="1" fill="#c0c0c0"/><rect x="7" y="1" width="1" height="1" fill="#808080"/><rect x="0" y="2" width="1" height="1" fill="#808080"/><rect x="1" y="2" width="1" height="1" fill="#ffffff"/><rect x="2" y="2" width="1" height="1" fill="#ffff00"/><rect x="3" y="2" width="1" height="1" fill="#c0c0c0"/><rect x="4" y="2" width="1" height="1" fill="#ffff00"/><rect x="5" y="2" width="1" height="1" fill="#c0c0c0"/><rect x="6" y="2" width="1" height="1" fill="#ffff00"/><rect x="7" y="2" width="1" height="1" fill="#c0c0c0"/><rect x="8" y="2" width="5" height="1" fill="#808080"/><rect x="0" y="3" width="1" height="1" fill="#808080"/><rect x="1" y="3" width="1" height="1" fill="#ffffff"/><rect x="2" y="3" width="1" height="1" fill="#c0c0c0"/><rect x="3" y="3" width="1" height="1" fill="#ffff00"/><rect x="4" y="3" width="1" height="1" fill="#c0c0c0"/><rect x="5" y="3" width="1" height="1" fill="#ffff00"/><rect x="6" y="3" width="1" height="1" fill="#c0c0c0"/><rect x="7" y="3" width="1" height="1" fill="#ffff00"/><rect x="8" y="3" width="1" height="1" fill="#c0c0c0"/><rect x="9" y="3" width="1" height="1" fill="#ffff00"/><rect x="10" y="3" width="1" height="1" fill="#c0c0c0"/><rect x="11" y="3" width="1" height="1" fill="#ffff00"/><rect x="12" y="3" width="1" height="1" fill="#c0c0c0"/><rect x="13" y="3" width="1" height="1" fill="#000000"/><rect x="0" y="4" width="1" height="1" fill="#808080"/><rect x="1" y="4" width="1" height="1" fill="#ffffff"/><rect x="2" y="4" width="1" height="1" fill="#ffff00"/><rect x="3" y="4" width="1" height="1" fill="#c0c0c0"/><rect x="4" y="4" width="11" height="1" fill="#000000"/><rect x="0" y="5" width="1" height="1" fill="#808080"/><rect x="1" y="5" width="1" height="1" fill="#ffffff"/><rect x="2" y="5" width="1" height="1" fill="#c0c0c0"/><rect x="3" y="5" width="1" height="1" fill="#000000"/><rect x="4" y="5" width="1" height="1" fill="#ffff00"/><rect x="5" y="5" width="1" height="1" fill="#c0c0c0"/><rect x="6" y="5" width="1" height="1" fill="#ffff00"/><rect x="7" y="5" width="1" height="1" fill="#c0c0c0"/><rect x="8" y="5" width="1" height="1" fill="#ffff00"/><rect x="9" y="5" width="1" height="1" fill="#c0c0c0"/><rect x="10" y="5" width="1" height="1" fill="#ffff00"/><rect x="11" y="5" width="1" height="1" fill="#c0c0c0"/><rect x="12" y="5" width="1" height="1" fill="#ffff00"/><rect x="13" y="5" width="1" height="1" fill="#c0c0c0"/><rect x="14" y="5" width="1" height="1" fill="#000000"/><rect x="0" y="6" width="1" height="1" fill="#808080"/><rect x="1" y="6" width="1" height="1" fill="#ffffff"/><rect x="2" y="6" width="1" height="1" fill="#ffff00"/><rect x="3" y="6" width="1" height="1" fill="#000000"/><rect x="4" y="6" width="1" height="1" fill="#c0c0c0"/><rect x="5" y="6" width="1" height="1" fill="#ffff00"/><rect x="6" y="6" width="1" height="1" fill="#c0c0c0"/><rect x="7" y="6" width="1" height="1" fill="#ffff00"/><rect x="8" y="6" width="1" height="1" fill="#c0c0c0"/><rect x="9" y="6" width="1" height="1" fill="#ffff00"/><rect x="10" y="6" width="1" height="1" fill="#c0c0c0"/><rect x="11" y="6" width="1" height="1" fill="#ffff00"/><rect x="12" y="6" width="1" height="1" fill="#c0c0c0"/><rect x="13" y="6" width="1" height="1" fill="#000000"/><rect x="0" y="7" width="1" height="1" fill="#808080"/><rect x="1" y="7" width="1" height="1" fill="#ffffff"/><rect x="2" y="7" width="1" height="1" fill="#000000"/><rect x="3" y="7" width="1" height="1" fill="#ffff00"/><rect x="4" y="7" width="1" height="1" fill="#c0c0c0"/><rect x="5" y="7" width="1" height="1" fill="#ffff00"/><rect x="6" y="7" width="1" height="1" fill="#c0c0c0"/><rect x="7" y="7" width="1" height="1" fill="#ffff00"/><rect x="8" y="7" width="1" height="1" fill="#c0c0c0"/><rect x="9" y="7" width="1" height="1" fill="#ffff00"/><rect x="10" y="7" width="1" height="1" fill="#c0c0c0"/><rect x="11" y="7" width="1" height="1" fill="#ffff00"/><rect x="12" y="7" width="1" height="1" fill="#c0c0c0"/><rect x="13" y="7" width="1" height="1" fill="#000000"/><rect x="0" y="8" width="1" height="1" fill="#808080"/><rect x="1" y="8" width="1" height="1" fill="#ffffff"/><rect x="2" y="8" width="1" height="1" fill="#000000"/><rect x="3" y="8" width="1" height="1" fill="#c0c0c0"/><rect x="4" y="8" width="1" height="1" fill="#ffff00"/><rect x="5" y="8" width="1" height="1" fill="#c0c0c0"/><rect x="6" y="8" width="1" height="1" fill="#ffff00"/><rect x="7" y="8" width="1" height="1" fill="#c0c0c0"/><rect x="8" y="8" width="1" height="1" fill="#ffff00"/><rect x="9" y="8" width="1" height="1" fill="#c0c0c0"/><rect x="10" y="8" width="1" height="1" fill="#ffff00"/><rect x="11" y="8" width="1" height="1" fill="#c0c0c0"/><rect x="12" y="8" width="1" height="1" fill="#ffff00"/><rect x="13" y="8" width="1" height="1" fill="#000000"/><rect x="0" y="9" width="1" height="1" fill="#808080"/><rect x="1" y="9" width="1" height="1" fill="#000000"/><rect x="2" y="9" width="1" height="1" fill="#ffff00"/><rect x="3" y="9" width="1" height="1" fill="#c0c0c0"/><rect x="4" y="9" width="1" height="1" fill="#ffff00"/><rect x="5" y="9" width="1" height="1" fill="#c0c0c0"/><rect x="6" y="9" width="1" height="1" fill="#ffff00"/><rect x="7" y="9" width="1" height="1" fill="#c0c0c0"/><rect x="8" y="9" width="1" height="1" fill="#ffff00"/><rect x="9" y="9" width="1" height="1" fill="#c0c0c0"/><rect x="10" y="9" width="1" height="1" fill="#ffff00"/><rect x="11" y="9" width="1" height="1" fill="#c0c0c0"/><rect x="12" y="9" width="1" height="1" fill="#000000"/><rect x="0" y="10" width="1" height="1" fill="#808080"/><rect x="1" y="10" width="1" height="1" fill="#000000"/><rect x="2" y="10" width="1" height="1" fill="#c0c0c0"/><rect x="3" y="10" width="1" height="1" fill="#ffff00"/><rect x="4" y="10" width="1" height="1" fill="#c0c0c0"/><rect x="5" y="10" width="1" height="1" fill="#ffff00"/><rect x="6" y="10" width="1" height="1" fill="#c0c0c0"/><rect x="7" y="10" width="1" height="1" fill="#ffff00"/><rect x="8" y="10" width="1" height="1" fill="#c0c0c0"/><rect x="9" y="10" width="1" height="1" fill="#ffff00"/><rect x="10" y="10" width="1" height="1" fill="#c0c0c0"/><rect x="11" y="10" width="1" height="1" fill="#ffff00"/><rect x="12" y="10" width="1" height="1" fill="#000000"/><rect x="0" y="11" width="13" height="1" fill="#000000"/><rect x="1" y="12" width="11" height="1" fill="#000000"/></svg>
<div class="t" style="left:41px;top:98px;font-size:12px;letter-spacing:-0.5px">Service Manager</div>
<div class="a" style="left:10px;top:120px;width:10px;height:1px;background-image:linear-gradient(90deg,#808080 50%,transparent 50%);background-size:2px 1px"></div>
<svg class="a" style="left:20px;top:114px" width="15" height="13" viewBox="0 0 15 13" shape-rendering="crispEdges"><rect x="2" y="0" width="5" height="1" fill="#808080"/><rect x="1" y="1" width="1" height="1" fill="#808080"/><rect x="2" y="1" width="1" height="1" fill="#ffffff"/><rect x="3" y="1" width="1" height="1" fill="#ffff00"/><rect x="4" y="1" width="1" height="1" fill="#c0c0c0"/><rect x="5" y="1" width="1" height="1" fill="#ffff00"/><rect x="6" y="1" width="1" height="1" fill="#c0c0c0"/><rect x="7" y="1" width="1" height="1" fill="#808080"/><rect x="0" y="2" width="1" height="1" fill="#808080"/><rect x="1" y="2" width="1" height="1" fill="#ffffff"/><rect x="2" y="2" width="1" height="1" fill="#ffff00"/><rect x="3" y="2" width="1" height="1" fill="#c0c0c0"/><rect x="4" y="2" width="1" height="1" fill="#ffff00"/><rect x="5" y="2" width="1" height="1" fill="#c0c0c0"/><rect x="6" y="2" width="1" height="1" fill="#ffff00"/><rect x="7" y="2" width="1" height="1" fill="#c0c0c0"/><rect x="8" y="2" width="6" height="1" fill="#808080"/><rect x="14" y="2" width="1" height="1" fill="#000000"/><rect x="0" y="3" width="1" height="1" fill="#808080"/><rect x="1" y="3" width="1" height="1" fill="#ffffff"/><rect x="2" y="3" width="1" height="1" fill="#c0c0c0"/><rect x="3" y="3" width="1" height="1" fill="#ffff00"/><rect x="4" y="3" width="1" height="1" fill="#c0c0c0"/><rect x="5" y="3" width="1" height="1" fill="#ffff00"/><rect x="6" y="3" width="1" height="1" fill="#c0c0c0"/><rect x="7" y="3" width="1" height="1" fill="#ffff00"/><rect x="8" y="3" width="1" height="1" fill="#c0c0c0"/><rect x="9" y="3" width="1" height="1" fill="#ffff00"/><rect x="10" y="3" width="1" height="1" fill="#c0c0c0"/><rect x="11" y="3" width="1" height="1" fill="#ffff00"/><rect x="12" y="3" width="1" height="1" fill="#c0c0c0"/><rect x="13" y="3" width="1" height="1" fill="#ffff00"/><rect x="14" y="3" width="1" height="1" fill="#000000"/><rect x="0" y="4" width="1" height="1" fill="#808080"/><rect x="1" y="4" width="1" height="1" fill="#ffffff"/><rect x="2" y="4" width="1" height="1" fill="#ffff00"/><rect x="3" y="4" width="1" height="1" fill="#c0c0c0"/><rect x="4" y="4" width="1" height="1" fill="#ffff00"/><rect x="5" y="4" width="1" height="1" fill="#c0c0c0"/><rect x="6" y="4" width="1" height="1" fill="#ffff00"/><rect x="7" y="4" width="1" height="1" fill="#c0c0c0"/><rect x="8" y="4" width="1" height="1" fill="#ffff00"/><rect x="9" y="4" width="1" height="1" fill="#c0c0c0"/><rect x="10" y="4" width="1" height="1" fill="#ffff00"/><rect x="11" y="4" width="1" height="1" fill="#c0c0c0"/><rect x="12" y="4" width="1" height="1" fill="#ffff00"/><rect x="13" y="4" width="1" height="1" fill="#c0c0c0"/><rect x="14" y="4" width="1" height="1" fill="#000000"/><rect x="0" y="5" width="1" height="1" fill="#808080"/><rect x="1" y="5" width="1" height="1" fill="#ffffff"/><rect x="2" y="5" width="1" height="1" fill="#c0c0c0"/><rect x="3" y="5" width="1" height="1" fill="#ffff00"/><rect x="4" y="5" width="1" height="1" fill="#c0c0c0"/><rect x="5" y="5" width="1" height="1" fill="#ffff00"/><rect x="6" y="5" width="1" height="1" fill="#c0c0c0"/><rect x="7" y="5" width="1" height="1" fill="#ffff00"/><rect x="8" y="5" width="1" height="1" fill="#c0c0c0"/><rect x="9" y="5" width="1" height="1" fill="#ffff00"/><rect x="10" y="5" width="1" height="1" fill="#c0c0c0"/><rect x="11" y="5" width="1" height="1" fill="#ffff00"/><rect x="12" y="5" width="1" height="1" fill="#c0c0c0"/><rect x="13" y="5" width="1" height="1" fill="#ffff00"/><rect x="14" y="5" width="1" height="1" fill="#000000"/><rect x="0" y="6" width="1" height="1" fill="#808080"/><rect x="1" y="6" width="1" height="1" fill="#ffffff"/><rect x="2" y="6" width="1" height="1" fill="#ffff00"/><rect x="3" y="6" width="1" height="1" fill="#c0c0c0"/><rect x="4" y="6" width="1" height="1" fill="#ffff00"/><rect x="5" y="6" width="1" height="1" fill="#c0c0c0"/><rect x="6" y="6" width="1" height="1" fill="#ffff00"/><rect x="7" y="6" width="1" height="1" fill="#c0c0c0"/><rect x="8" y="6" width="1" height="1" fill="#ffff00"/><rect x="9" y="6" width="1" height="1" fill="#c0c0c0"/><rect x="10" y="6" width="1" height="1" fill="#ffff00"/><rect x="11" y="6" width="1" height="1" fill="#c0c0c0"/><rect x="12" y="6" width="1" height="1" fill="#ffff00"/><rect x="13" y="6" width="1" height="1" fill="#c0c0c0"/><rect x="14" y="6" width="1" height="1" fill="#000000"/><rect x="0" y="7" width="1" height="1" fill="#808080"/><rect x="1" y="7" width="1" height="1" fill="#ffffff"/><rect x="2" y="7" width="1" height="1" fill="#c0c0c0"/><rect x="3" y="7" width="1" height="1" fill="#ffff00"/><rect x="4" y="7" width="1" height="1" fill="#c0c0c0"/><rect x="5" y="7" width="1" height="1" fill="#ffff00"/><rect x="6" y="7" width="1" height="1" fill="#c0c0c0"/><rect x="7" y="7" width="1" height="1" fill="#ffff00"/><rect x="8" y="7" width="1" height="1" fill="#c0c0c0"/><rect x="9" y="7" width="1" height="1" fill="#ffff00"/><rect x="10" y="7" width="1" height="1" fill="#c0c0c0"/><rect x="11" y="7" width="1" height="1" fill="#ffff00"/><rect x="12" y="7" width="1" height="1" fill="#c0c0c0"/><rect x="13" y="7" width="1" height="1" fill="#ffff00"/><rect x="14" y="7" width="1" height="1" fill="#000000"/><rect x="0" y="8" width="1" height="1" fill="#808080"/><rect x="1" y="8" width="1" height="1" fill="#ffffff"/><rect x="2" y="8" width="1" height="1" fill="#ffff00"/><rect x="3" y="8" width="1" height="1" fill="#c0c0c0"/><rect x="4" y="8" width="1" height="1" fill="#ffff00"/><rect x="5" y="8" width="1" height="1" fill="#c0c0c0"/><rect x="6" y="8" width="1" height="1" fill="#ffff00"/><rect x="7" y="8" width="1" height="1" fill="#c0c0c0"/><rect x="8" y="8" width="1" height="1" fill="#ffff00"/><rect x="9" y="8" width="1" height="1" fill="#c0c0c0"/><rect x="10" y="8" width="1" height="1" fill="#ffff00"/><rect x="11" y="8" width="1" height="1" fill="#c0c0c0"/><rect x="12" y="8" width="1" height="1" fill="#ffff00"/><rect x="13" y="8" width="1" height="1" fill="#c0c0c0"/><rect x="14" y="8" width="1" height="1" fill="#000000"/><rect x="0" y="9" width="1" height="1" fill="#808080"/><rect x="1" y="9" width="1" height="1" fill="#ffffff"/><rect x="2" y="9" width="1" height="1" fill="#c0c0c0"/><rect x="3" y="9" width="1" height="1" fill="#ffff00"/><rect x="4" y="9" width="1" height="1" fill="#c0c0c0"/><rect x="5" y="9" width="1" height="1" fill="#ffff00"/><rect x="6" y="9" width="1" height="1" fill="#c0c0c0"/><rect x="7" y="9" width="1" height="1" fill="#ffff00"/><rect x="8" y="9" width="1" height="1" fill="#c0c0c0"/><rect x="9" y="9" width="1" height="1" fill="#ffff00"/><rect x="10" y="9" width="1" height="1" fill="#c0c0c0"/><rect x="11" y="9" width="1" height="1" fill="#ffff00"/><rect x="12" y="9" width="1" height="1" fill="#c0c0c0"/><rect x="13" y="9" width="1" height="1" fill="#ffff00"/><rect x="14" y="9" width="1" height="1" fill="#000000"/><rect x="0" y="10" width="1" height="1" fill="#808080"/><rect x="1" y="10" width="1" height="1" fill="#ffffff"/><rect x="2" y="10" width="1" height="1" fill="#ffff00"/><rect x="3" y="10" width="1" height="1" fill="#c0c0c0"/><rect x="4" y="10" width="1" height="1" fill="#ffff00"/><rect x="5" y="10" width="1" height="1" fill="#c0c0c0"/><rect x="6" y="10" width="1" height="1" fill="#ffff00"/><rect x="7" y="10" width="1" height="1" fill="#c0c0c0"/><rect x="8" y="10" width="1" height="1" fill="#ffff00"/><rect x="9" y="10" width="1" height="1" fill="#c0c0c0"/><rect x="10" y="10" width="1" height="1" fill="#ffff00"/><rect x="11" y="10" width="1" height="1" fill="#c0c0c0"/><rect x="12" y="10" width="1" height="1" fill="#ffff00"/><rect x="13" y="10" width="1" height="1" fill="#c0c0c0"/><rect x="14" y="10" width="1" height="1" fill="#000000"/><rect x="0" y="11" width="1" height="1" fill="#808080"/><rect x="1" y="11" width="14" height="1" fill="#000000"/><rect x="1" y="12" width="14" height="1" fill="#000000"/></svg>
<div class="t" style="left:41px;top:114px;font-size:12px;letter-spacing:-0.5px">Workbench</div>
<div class="a" style="left:10px;top:136px;width:10px;height:1px;background-image:linear-gradient(90deg,#808080 50%,transparent 50%);background-size:2px 1px"></div>
<svg class="a" style="left:20px;top:130px" width="15" height="13" viewBox="0 0 15 13" shape-rendering="crispEdges"><rect x="2" y="0" width="5" height="1" fill="#808080"/><rect x="1" y="1" width="1" height="1" fill="#808080"/><rect x="2" y="1" width="1" height="1" fill="#ffffff"/><rect x="3" y="1" width="1" height="1" fill="#ffff00"/><rect x="4" y="1" width="1" height="1" fill="#c0c0c0"/><rect x="5" y="1" width="1" height="1" fill="#ffff00"/><rect x="6" y="1" width="1" height="1" fill="#c0c0c0"/><rect x="7" y="1" width="1" height="1" fill="#808080"/><rect x="0" y="2" width="1" height="1" fill="#808080"/><rect x="1" y="2" width="1" height="1" fill="#ffffff"/><rect x="2" y="2" width="1" height="1" fill="#ffff00"/><rect x="3" y="2" width="1" height="1" fill="#c0c0c0"/><rect x="4" y="2" width="1" height="1" fill="#ffff00"/><rect x="5" y="2" width="1" height="1" fill="#c0c0c0"/><rect x="6" y="2" width="1" height="1" fill="#ffff00"/><rect x="7" y="2" width="1" height="1" fill="#c0c0c0"/><rect x="8" y="2" width="6" height="1" fill="#808080"/><rect x="14" y="2" width="1" height="1" fill="#000000"/><rect x="0" y="3" width="1" height="1" fill="#808080"/><rect x="1" y="3" width="1" height="1" fill="#ffffff"/><rect x="2" y="3" width="1" height="1" fill="#c0c0c0"/><rect x="3" y="3" width="1" height="1" fill="#ffff00"/><rect x="4" y="3" width="1" height="1" fill="#c0c0c0"/><rect x="5" y="3" width="1" height="1" fill="#ffff00"/><rect x="6" y="3" width="1" height="1" fill="#c0c0c0"/><rect x="7" y="3" width="1" height="1" fill="#ffff00"/><rect x="8" y="3" width="1" height="1" fill="#c0c0c0"/><rect x="9" y="3" width="1" height="1" fill="#ffff00"/><rect x="10" y="3" width="1" height="1" fill="#c0c0c0"/><rect x="11" y="3" width="1" height="1" fill="#ffff00"/><rect x="12" y="3" width="1" height="1" fill="#c0c0c0"/><rect x="13" y="3" width="1" height="1" fill="#ffff00"/><rect x="14" y="3" width="1" height="1" fill="#000000"/><rect x="0" y="4" width="1" height="1" fill="#808080"/><rect x="1" y="4" width="1" height="1" fill="#ffffff"/><rect x="2" y="4" width="1" height="1" fill="#ffff00"/><rect x="3" y="4" width="1" height="1" fill="#c0c0c0"/><rect x="4" y="4" width="1" height="1" fill="#ffff00"/><rect x="5" y="4" width="1" height="1" fill="#c0c0c0"/><rect x="6" y="4" width="1" height="1" fill="#ffff00"/><rect x="7" y="4" width="1" height="1" fill="#c0c0c0"/><rect x="8" y="4" width="1" height="1" fill="#ffff00"/><rect x="9" y="4" width="1" height="1" fill="#c0c0c0"/><rect x="10" y="4" width="1" height="1" fill="#ffff00"/><rect x="11" y="4" width="1" height="1" fill="#c0c0c0"/><rect x="12" y="4" width="1" height="1" fill="#ffff00"/><rect x="13" y="4" width="1" height="1" fill="#c0c0c0"/><rect x="14" y="4" width="1" height="1" fill="#000000"/><rect x="0" y="5" width="1" height="1" fill="#808080"/><rect x="1" y="5" width="1" height="1" fill="#ffffff"/><rect x="2" y="5" width="1" height="1" fill="#c0c0c0"/><rect x="3" y="5" width="1" height="1" fill="#ffff00"/><rect x="4" y="5" width="1" height="1" fill="#c0c0c0"/><rect x="5" y="5" width="1" height="1" fill="#ffff00"/><rect x="6" y="5" width="1" height="1" fill="#c0c0c0"/><rect x="7" y="5" width="1" height="1" fill="#ffff00"/><rect x="8" y="5" width="1" height="1" fill="#c0c0c0"/><rect x="9" y="5" width="1" height="1" fill="#ffff00"/><rect x="10" y="5" width="1" height="1" fill="#c0c0c0"/><rect x="11" y="5" width="1" height="1" fill="#ffff00"/><rect x="12" y="5" width="1" height="1" fill="#c0c0c0"/><rect x="13" y="5" width="1" height="1" fill="#ffff00"/><rect x="14" y="5" width="1" height="1" fill="#000000"/><rect x="0" y="6" width="1" height="1" fill="#808080"/><rect x="1" y="6" width="1" height="1" fill="#ffffff"/><rect x="2" y="6" width="1" height="1" fill="#ffff00"/><rect x="3" y="6" width="1" height="1" fill="#c0c0c0"/><rect x="4" y="6" width="1" height="1" fill="#ffff00"/><rect x="5" y="6" width="1" height="1" fill="#c0c0c0"/><rect x="6" y="6" width="1" height="1" fill="#ffff00"/><rect x="7" y="6" width="1" height="1" fill="#c0c0c0"/><rect x="8" y="6" width="1" height="1" fill="#ffff00"/><rect x="9" y="6" width="1" height="1" fill="#c0c0c0"/><rect x="10" y="6" width="1" height="1" fill="#ffff00"/><rect x="11" y="6" width="1" height="1" fill="#c0c0c0"/><rect x="12" y="6" width="1" height="1" fill="#ffff00"/><rect x="13" y="6" width="1" height="1" fill="#c0c0c0"/><rect x="14" y="6" width="1" height="1" fill="#000000"/><rect x="0" y="7" width="1" height="1" fill="#808080"/><rect x="1" y="7" width="1" height="1" fill="#ffffff"/><rect x="2" y="7" width="1" height="1" fill="#c0c0c0"/><rect x="3" y="7" width="1" height="1" fill="#ffff00"/><rect x="4" y="7" width="1" height="1" fill="#c0c0c0"/><rect x="5" y="7" width="1" height="1" fill="#ffff00"/><rect x="6" y="7" width="1" height="1" fill="#c0c0c0"/><rect x="7" y="7" width="1" height="1" fill="#ffff00"/><rect x="8" y="7" width="1" height="1" fill="#c0c0c0"/><rect x="9" y="7" width="1" height="1" fill="#ffff00"/><rect x="10" y="7" width="1" height="1" fill="#c0c0c0"/><rect x="11" y="7" width="1" height="1" fill="#ffff00"/><rect x="12" y="7" width="1" height="1" fill="#c0c0c0"/><rect x="13" y="7" width="1" height="1" fill="#ffff00"/><rect x="14" y="7" width="1" height="1" fill="#000000"/><rect x="0" y="8" width="1" height="1" fill="#808080"/><rect x="1" y="8" width="1" height="1" fill="#ffffff"/><rect x="2" y="8" width="1" height="1" fill="#ffff00"/><rect x="3" y="8" width="1" height="1" fill="#c0c0c0"/><rect x="4" y="8" width="1" height="1" fill="#ffff00"/><rect x="5" y="8" width="1" height="1" fill="#c0c0c0"/><rect x="6" y="8" width="1" height="1" fill="#ffff00"/><rect x="7" y="8" width="1" height="1" fill="#c0c0c0"/><rect x="8" y="8" width="1" height="1" fill="#ffff00"/><rect x="9" y="8" width="1" height="1" fill="#c0c0c0"/><rect x="10" y="8" width="1" height="1" fill="#ffff00"/><rect x="11" y="8" width="1" height="1" fill="#c0c0c0"/><rect x="12" y="8" width="1" height="1" fill="#ffff00"/><rect x="13" y="8" width="1" height="1" fill="#c0c0c0"/><rect x="14" y="8" width="1" height="1" fill="#000000"/><rect x="0" y="9" width="1" height="1" fill="#808080"/><rect x="1" y="9" width="1" height="1" fill="#ffffff"/><rect x="2" y="9" width="1" height="1" fill="#c0c0c0"/><rect x="3" y="9" width="1" height="1" fill="#ffff00"/><rect x="4" y="9" width="1" height="1" fill="#c0c0c0"/><rect x="5" y="9" width="1" height="1" fill="#ffff00"/><rect x="6" y="9" width="1" height="1" fill="#c0c0c0"/><rect x="7" y="9" width="1" height="1" fill="#ffff00"/><rect x="8" y="9" width="1" height="1" fill="#c0c0c0"/><rect x="9" y="9" width="1" height="1" fill="#ffff00"/><rect x="10" y="9" width="1" height="1" fill="#c0c0c0"/><rect x="11" y="9" width="1" height="1" fill="#ffff00"/><rect x="12" y="9" width="1" height="1" fill="#c0c0c0"/><rect x="13" y="9" width="1" height="1" fill="#ffff00"/><rect x="14" y="9" width="1" height="1" fill="#000000"/><rect x="0" y="10" width="1" height="1" fill="#808080"/><rect x="1" y="10" width="1" height="1" fill="#ffffff"/><rect x="2" y="10" width="1" height="1" fill="#ffff00"/><rect x="3" y="10" width="1" height="1" fill="#c0c0c0"/><rect x="4" y="10" width="1" height="1" fill="#ffff00"/><rect x="5" y="10" width="1" height="1" fill="#c0c0c0"/><rect x="6" y="10" width="1" height="1" fill="#ffff00"/><rect x="7" y="10" width="1" height="1" fill="#c0c0c0"/><rect x="8" y="10" width="1" height="1" fill="#ffff00"/><rect x="9" y="10" width="1" height="1" fill="#c0c0c0"/><rect x="10" y="10" width="1" height="1" fill="#ffff00"/><rect x="11" y="10" width="1" height="1" fill="#c0c0c0"/><rect x="12" y="10" width="1" height="1" fill="#ffff00"/><rect x="13" y="10" width="1" height="1" fill="#c0c0c0"/><rect x="14" y="10" width="1" height="1" fill="#000000"/><rect x="0" y="11" width="1" height="1" fill="#808080"/><rect x="1" y="11" width="14" height="1" fill="#000000"/><rect x="1" y="12" width="14" height="1" fill="#000000"/></svg>
<div class="t" style="left:41px;top:130px;font-size:12px;letter-spacing:-0.5px">XML Specification</div>
</div>
<div class="a" style="left:282px;top:160px;width:535px;height:387px;border-top:1px solid #808080;border-left:1px solid #808080;border-right:1px solid #fff;border-bottom:1px solid #fff;"></div>
<div class="a" style="left:283px;top:161px;width:533px;height:385px;background:#fff;border-top:1px solid #000;border-left:1px solid #000;border-right:1px solid #d4d0c8;border-bottom:1px solid #d4d0c8;"></div>
<div class="a" style="left:284px;top:162px;width:531px;height:367px;overflow:hidden;background:#fff">
<div class="a" style="left:0px;top:0px;width:137px;height:17px;background:#d4d0c8;border-top:1px solid #fff;border-left:1px solid #fff;border-right:1px solid #000;border-bottom:1px solid #000;box-shadow:inset -1px -1px 0 #808080"></div>
<div class="t" style="left:6px;top:3px;font-size:12px;letter-spacing:-0.5px">Description</div>
<div class="a" style="left:137px;top:0px;width:96px;height:17px;background:#d4d0c8;border-top:1px solid #fff;border-left:1px solid #fff;border-right:1px solid #000;border-bottom:1px solid #000;box-shadow:inset -1px -1px 0 #808080"></div>
<div class="t" style="left:143px;top:3px;font-size:12px;letter-spacing:-0.5px">Account</div>
<div class="a" style="left:233px;top:0px;width:137px;height:17px;background:#d4d0c8;border-top:1px solid #fff;border-left:1px solid #fff;border-right:1px solid #000;border-bottom:1px solid #000;box-shadow:inset -1px -1px 0 #808080"></div>
<div class="t" style="left:239px;top:3px;font-size:12px;letter-spacing:-0.5px">Started</div>
<div class="a" style="left:370px;top:0px;width:137px;height:17px;background:#d4d0c8;border-top:1px solid #fff;border-left:1px solid #fff;border-right:1px solid #000;border-bottom:1px solid #000;box-shadow:inset -1px -1px 0 #808080"></div>
<div class="t" style="left:376px;top:3px;font-size:12px;letter-spacing:-0.5px">Last Run</div>
<div class="a" style="left:507px;top:0px;width:44px;height:17px;background:#d4d0c8;border-top:1px solid #fff;border-left:1px solid #fff;border-right:1px solid #000;border-bottom:1px solid #000;box-shadow:inset -1px -1px 0 #808080"></div>
<div class="t" style="left:513px;top:3px;font-size:12px;letter-spacing:-0.5px">Service</div>
<div class="a navy" style="left:2px;top:73px;width:529px;height:14px"></div>
<div class="a" style="left:2px;top:73px;width:529px;height:14px;border:1px dotted #802828"></div>
<div class="t" style="left:4px;top:19px;font-size:12px;letter-spacing:-0.35px">LIVE.DATA</div>
<div class="t" style="left:143px;top:19px;font-size:12px;letter-spacing:-0.35px">LIVE.DATA</div>
<div class="t" style="left:239px;top:19px;font-size:12px;letter-spacing:-0.35px">2/21/2008 10:36:49 AM</div>
<div class="t" style="left:376px;top:19px;font-size:12px;letter-spacing:-0.35px">2/21/2008 10:38:54 AM</div>
<div class="t" style="left:513px;top:19px;font-size:12px;letter-spacing:-0.35px">2008</div>
<div class="t" style="left:4px;top:33px;font-size:12px;letter-spacing:-0.35px">PILOT.DATA</div>
<div class="t" style="left:143px;top:33px;font-size:12px;letter-spacing:-0.35px">PILOT.DATA</div>
<div class="t" style="left:239px;top:33px;font-size:12px;letter-spacing:-0.35px">8/23/2006 4:58:28 PM</div>
<div class="t" style="left:376px;top:33px;font-size:12px;letter-spacing:-0.35px">8/23/2006 4:58:58 PM</div>
<div class="t" style="left:513px;top:33px;font-size:12px;letter-spacing:-0.35px">2006</div>
<div class="t" style="left:4px;top:47px;font-size:12px;letter-spacing:-0.35px">PILOT94.DATA</div>
<div class="t" style="left:143px;top:47px;font-size:12px;letter-spacing:-0.35px">PILOT94.DATA</div>
<div class="t" style="left:239px;top:47px;font-size:12px;letter-spacing:-0.35px">2/21/2008 3:39:18 PM</div>
<div class="t" style="left:376px;top:47px;font-size:12px;letter-spacing:-0.35px">2/21/2008 3:41:37 PM</div>
<div class="t" style="left:513px;top:47px;font-size:12px;letter-spacing:-0.35px">2008</div>
<div class="t" style="left:4px;top:61px;font-size:12px;letter-spacing:-0.35px">PROTO.DATA</div>
<div class="t" style="left:143px;top:61px;font-size:12px;letter-spacing:-0.35px">PROTO.DATA</div>
<div class="t" style="left:239px;top:61px;font-size:12px;letter-spacing:-0.35px">8/21/2006 3:00:47 PM</div>
<div class="t" style="left:376px;top:61px;font-size:12px;letter-spacing:-0.35px">8/21/2006 3:23:48 PM</div>
<div class="t" style="left:513px;top:61px;font-size:12px;letter-spacing:-0.35px">2006</div>
<div class="t w" style="left:4px;top:75px;font-size:12px;letter-spacing:-0.35px">TEST94.DATA</div>
<div class="t w" style="left:143px;top:75px;font-size:12px;letter-spacing:-0.35px">TEST94.DATA</div>
<div class="t w" style="left:239px;top:75px;font-size:12px;letter-spacing:-0.35px">6/3/2008 6:19:11 PM</div>
<div class="t w" style="left:376px;top:75px;font-size:12px;letter-spacing:-0.35px">6/3/2008 6:19:41 PM</div>
<div class="t w" style="left:513px;top:75px;font-size:12px;letter-spacing:-0.35px">2008</div>
</div>
<div class="track" style="left:141px;top:529px;width:130px;height:16px"></div>
<div class="a" style="left:141px;top:529px;width:16px;height:16px;background:#d4d0c8;border-top:1px solid #d4d0c8;border-left:1px solid #d4d0c8;border-right:1px solid #000;border-bottom:1px solid #000;box-shadow:inset 1px 1px 0 #fff,inset -1px -1px 0 #808080"><svg class="a" style="left:4px;top:3px" width="4" height="8"><path d="M4 0V8L0 4Z" fill="#000"/></svg></div>
<div class="a" style="left:157px;top:529px;width:86px;height:16px;background:#d4d0c8;border-top:1px solid #d4d0c8;border-left:1px solid #d4d0c8;border-right:1px solid #000;border-bottom:1px solid #000;box-shadow:inset 1px 1px 0 #fff,inset -1px -1px 0 #808080"></div>
<div class="a" style="left:255px;top:529px;width:16px;height:16px;background:#d4d0c8;border-top:1px solid #d4d0c8;border-left:1px solid #d4d0c8;border-right:1px solid #000;border-bottom:1px solid #000;box-shadow:inset 1px 1px 0 #fff,inset -1px -1px 0 #808080"><svg class="a" style="left:5px;top:3px" width="4" height="8"><path d="M0 0V8L4 4Z" fill="#000"/></svg></div>
<div class="track" style="left:284px;top:529px;width:531px;height:16px"></div>
<div class="a" style="left:284px;top:529px;width:16px;height:16px;background:#d4d0c8;border-top:1px solid #d4d0c8;border-left:1px solid #d4d0c8;border-right:1px solid #000;border-bottom:1px solid #000;box-shadow:inset 1px 1px 0 #fff,inset -1px -1px 0 #808080"><svg class="a" style="left:4px;top:3px" width="4" height="8"><path d="M4 0V8L0 4Z" fill="#000"/></svg></div>
<div class="a" style="left:300px;top:529px;width:323px;height:16px;background:#d4d0c8;border-top:1px solid #d4d0c8;border-left:1px solid #d4d0c8;border-right:1px solid #000;border-bottom:1px solid #000;box-shadow:inset 1px 1px 0 #fff,inset -1px -1px 0 #808080"></div>
<div class="a" style="left:799px;top:529px;width:16px;height:16px;background:#d4d0c8;border-top:1px solid #d4d0c8;border-left:1px solid #d4d0c8;border-right:1px solid #000;border-bottom:1px solid #000;box-shadow:inset 1px 1px 0 #fff,inset -1px -1px 0 #808080"><svg class="a" style="left:5px;top:3px" width="4" height="8"><path d="M0 0V8L4 4Z" fill="#000"/></svg></div>
<div class="a" style="left:377px;top:248px;width:148px;height:57px;background:#d4d0c8;border-top:1px solid #d4d0c8;border-left:1px solid #d4d0c8;border-right:1px solid #000;border-bottom:1px solid #000;box-shadow:inset 1px 1px 0 #fff,inset -1px -1px 0 #808080"></div>
<div class="t" style="left:396px;top:254px;font-size:12px;letter-spacing:-0.7px">Open</div>
<div class="t" style="left:396px;top:271px;font-size:12px;letter-spacing:-0.7px">New Service Manager</div>
<div class="t" style="left:396px;top:288px;font-size:12px;letter-spacing:-0.7px">Properties</div>
<div class="a" style="left:4px;top:551px;width:631px;height:41px;border-top:1px solid #808080;border-left:1px solid #808080;border-right:1px solid #fff;border-bottom:1px solid #fff;"></div>
<div class="a" style="left:636px;top:551px;width:67px;height:41px;border-top:1px solid #808080;border-left:1px solid #808080;border-right:1px solid #fff;border-bottom:1px solid #fff;"></div>
<div class="a" style="left:705px;top:551px;width:95px;height:41px;border-top:1px solid #808080;border-left:1px solid #808080;border-right:1px solid #fff;border-bottom:1px solid #fff;"></div>
<div class="t" style="left:8px;top:566px;font-size:12px;letter-spacing:-0.29px">dsc9000n - /av1/igi/avante94/flodata/dev/TEST94.DATA</div>
<div class="t" style="left:646px;top:566px;font-size:12px;letter-spacing:0.2px">6/4/2008</div>
<div class="t" style="left:732px;top:566px;font-size:12px;letter-spacing:-0.6px">1:34 PM</div>
<svg class="a" style="left:805px;top:579px" width="12" height="12" viewBox="0 0 12 12" shape-rendering="crispEdges"><rect x="11" y="0" width="1" height="1" fill="#fff"/><rect x="10" y="1" width="1" height="1" fill="#fff"/><rect x="11" y="1" width="1" height="1" fill="#808080"/><rect x="9" y="2" width="1" height="1" fill="#fff"/><rect x="10" y="2" width="1" height="1" fill="#808080"/><rect x="11" y="2" width="1" height="1" fill="#808080"/><rect x="8" y="3" width="1" height="1" fill="#fff"/><rect x="9" y="3" width="1" height="1" fill="#808080"/><rect x="10" y="3" width="1" height="1" fill="#808080"/><rect x="7" y="4" width="1" height="1" fill="#fff"/><rect x="8" y="4" width="1" height="1" fill="#808080"/><rect x="9" y="4" width="1" height="1" fill="#808080"/><rect x="11" y="4" width="1" height="1" fill="#fff"/><rect x="6" y="5" width="1" height="1" fill="#fff"/><rect x="7" y="5" width="1" height="1" fill="#808080"/><rect x="8" y="5" width="1" height="1" fill="#808080"/><rect x="10" y="5" width="1" height="1" fill="#fff"/><rect x="11" y="5" width="1" height="1" fill="#808080"/><rect x="5" y="6" width="1" height="1" fill="#fff"/><rect x="6" y="6" width="1" height="1" fill="#808080"/><rect x="7" y="6" width="1" height="1" fill="#808080"/><rect x="9" y="6" width="1" height="1" fill="#fff"/><rect x="10" y="6" width="1" height="1" fill="#808080"/><rect x="11" y="6" width="1" height="1" fill="#808080"/><rect x="4" y="7" width="1" height="1" fill="#fff"/><rect x="5" y="7" width="1" height="1" fill="#808080"/><rect x="6" y="7" width="1" height="1" fill="#808080"/><rect x="8" y="7" width="1" height="1" fill="#fff"/><rect x="9" y="7" width="1" height="1" fill="#808080"/><rect x="10" y="7" width="1" height="1" fill="#808080"/><rect x="3" y="8" width="1" height="1" fill="#fff"/><rect x="4" y="8" width="1" height="1" fill="#808080"/><rect x="5" y="8" width="1" height="1" fill="#808080"/><rect x="7" y="8" width="1" height="1" fill="#fff"/><rect x="8" y="8" width="1" height="1" fill="#808080"/><rect x="9" y="8" width="1" height="1" fill="#808080"/><rect x="11" y="8" width="1" height="1" fill="#fff"/><rect x="2" y="9" width="1" height="1" fill="#fff"/><rect x="3" y="9" width="1" height="1" fill="#808080"/><rect x="4" y="9" width="1" height="1" fill="#808080"/><rect x="6" y="9" width="1" height="1" fill="#fff"/><rect x="7" y="9" width="1" height="1" fill="#808080"/><rect x="8" y="9" width="1" height="1" fill="#808080"/><rect x="10" y="9" width="1" height="1" fill="#fff"/><rect x="11" y="9" width="1" height="1" fill="#808080"/><rect x="1" y="10" width="1" height="1" fill="#fff"/><rect x="2" y="10" width="1" height="1" fill="#808080"/><rect x="3" y="10" width="1" height="1" fill="#808080"/><rect x="5" y="10" width="1" height="1" fill="#fff"/><rect x="6" y="10" width="1" height="1" fill="#808080"/><rect x="7" y="10" width="1" height="1" fill="#808080"/><rect x="9" y="10" width="1" height="1" fill="#fff"/><rect x="10" y="10" width="1" height="1" fill="#808080"/><rect x="11" y="10" width="1" height="1" fill="#808080"/><rect x="0" y="11" width="1" height="1" fill="#fff"/><rect x="1" y="11" width="1" height="1" fill="#808080"/><rect x="2" y="11" width="1" height="1" fill="#808080"/><rect x="4" y="11" width="1" height="1" fill="#fff"/><rect x="5" y="11" width="1" height="1" fill="#808080"/><rect x="6" y="11" width="1" height="1" fill="#808080"/><rect x="8" y="11" width="1" height="1" fill="#fff"/><rect x="9" y="11" width="1" height="1" fill="#808080"/><rect x="10" y="11" width="1" height="1" fill="#808080"/></svg>
</body></html>
